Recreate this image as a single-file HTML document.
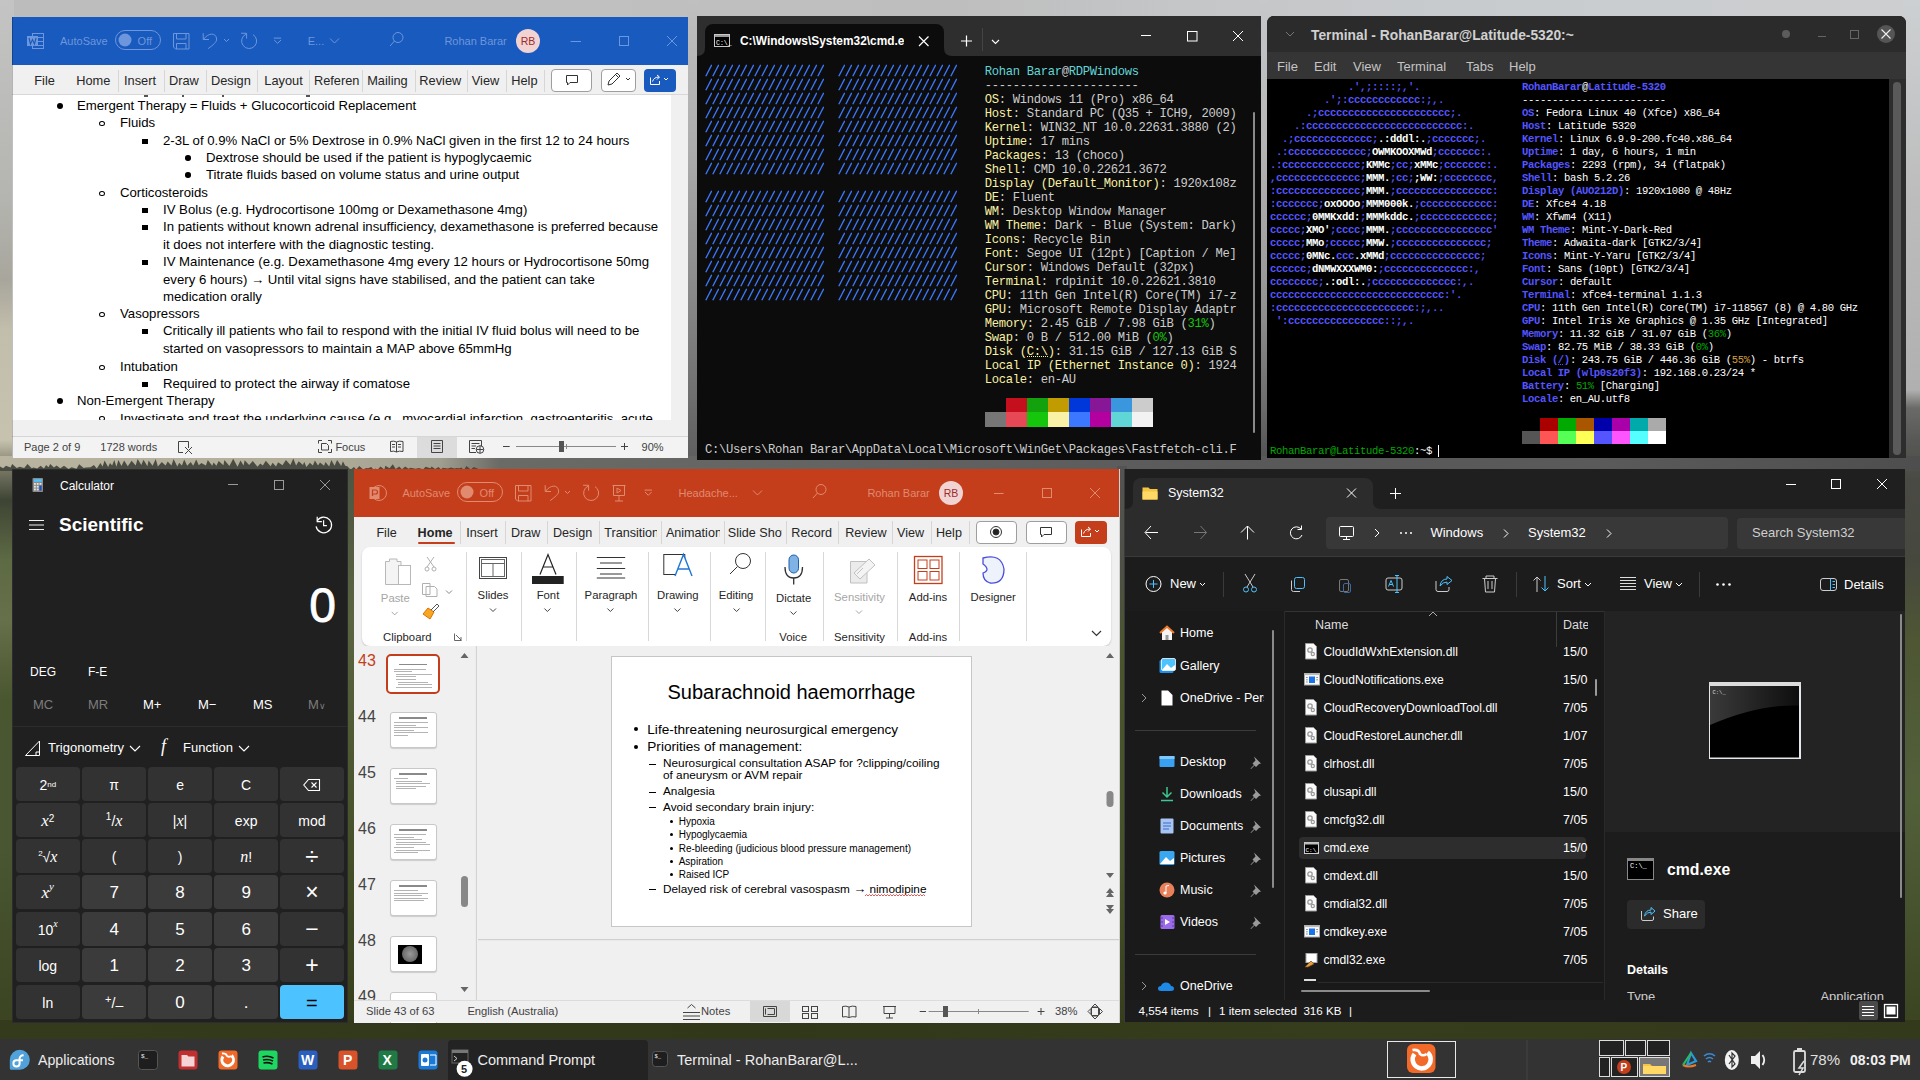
<!DOCTYPE html>
<html><head><meta charset="utf-8">
<style>
*{box-sizing:border-box;margin:0;padding:0}
html,body{width:1920px;height:1080px;overflow:hidden}
body{position:relative;font-family:"Liberation Sans",sans-serif;
background:linear-gradient(180deg,#c4c4c4 0px,#bdbdbd 200px,#a9a9a5 380px,#8a8a84 455px,#5a5f4a 520px,#48502c 700px,#3d4424 900px,#363c1e 1040px)}
.a{position:absolute}
.w{position:absolute;overflow:hidden}
.mono{font-family:"Liberation Mono",monospace}
.cmdp{font-size:12.2px;letter-spacing:-0.32px;line-height:14px;color:#cccccc;white-space:pre}
.cmdp .b{color:#3b78ff}.cmdp .c{color:#61d6d6}.cmdp .y{color:#f9f1a5}.cmdp .g{color:#16c60c}
.xfp{font-size:10.6px;letter-spacing:-0.36px;line-height:13px;color:#fff;white-space:pre}
.xfp .lb,.xfp .k{color:#5555ff;font-weight:bold}.xfp .lw{color:#fff;font-weight:bold}.xfp .v{color:#fff}.xfp .g{color:#00aa00}.xfp .o{color:#d7a040}.xfp .pg{color:#00aa00}
.wl{font-size:13.2px;line-height:20px;white-space:nowrap;color:#000}
.wt{top:55.5px;font-size:12.8px;line-height:16px;color:#262626;white-space:nowrap}
.wf{font-size:11px;line-height:16px;color:#6e96dc;white-space:nowrap}
.ws{top:422px;font-size:11px;line-height:16px;color:#424242;white-space:nowrap}
.cb{width:63.5px;height:33.6px;border-radius:4px;display:flex;align-items:center;justify-content:center;line-height:1;white-space:nowrap;padding-top:1.5px}
.cm{top:228px;font-size:13px;line-height:16px;color:#fff}
.pt{top:56px;font-size:12.6px;line-height:16px;color:#262626;white-space:nowrap}
.pf{top:16px;font-size:11px;line-height:16px;color:#e08a70;white-space:nowrap}
.ps{top:534px;font-size:11.2px;line-height:16px;color:#424242;white-space:nowrap}
.et{font-size:12.5px;line-height:16px;color:#fff;white-space:nowrap}
.ee{font-size:13px;line-height:16px;color:#fff;white-space:nowrap}
.xm{top:43px;color:#c4c4c4;font-size:13px;line-height:16px}
</style></head><body>

<!-- WALL -->
<div class="a" style="left:0;top:0;width:1920px;height:20px;background:linear-gradient(90deg,#bcbcbc 0,#c0c0c0 25%,#bebebe 50%,#c4c6c8 62%,#c9ccce 80%,#ccced0 100%)"></div>
<div class="a" style="left:0;top:0;width:14px;height:1040px;background:linear-gradient(180deg,#c4c4c4 0,#b4b4b0 200px,#a8a69c 280px,#c2beac 330px,#c6c2ae 440px,#7a7a66 468px,#3e4434 500px,#5e6a44 560px,#66704a 620px,#4a5630 700px,#4a5632 850px,#3a4220 1040px)"></div>
<div class="a" style="left:1903px;top:0;width:17px;height:1040px;background:linear-gradient(180deg,#cdd0d2 0,#bcbcbc 200px,#b0b0b0 390px,#6a6a68 408px,#585856 440px,#4a4a44 480px,#46483e 560px,#4e5634 640px,#52603a 800px,#3a4220 1040px)"></div>
<div class="a" style="left:686px;top:0;width:13px;height:470px;background:linear-gradient(180deg,#c0c0c0 0,#acacac 150px,#8c8c8c 280px,#6e6e6e 400px,#5c5c5c 470px)"></div>
<div class="a" style="left:1259px;top:0;width:10px;height:470px;background:linear-gradient(180deg,#c6c8ca 0,#b4b4b4 150px,#9a9a9a 280px,#6e6e6e 400px,#4e4e4e 470px)"></div>
<div class="a" style="left:0;top:456px;width:1920px;height:15px;background:linear-gradient(90deg,#b8b4a0 0,#b2ae9a 300px,#a09e90 440px,#6a6a66 500px,#626262 900px,#585858 1300px,#5a5a5a 1600px,#4e4e4e 1920px)"></div>
<svg class="a" style="left:0;top:456px" width="480" height="15"><polygon points="0.0,15.0 0.0,10.4 3.1,12.2 6.0,9.8 10.5,11.5 12.2,8.0 16.7,12.0 19.6,10.8 24.2,12.0 27.5,8.1 31.7,12.2 33.6,11.6 37.1,12.4 40.7,9.7 43.9,12.6 46.2,9.0 48.5,11.3 50.2,8.0 54.0,11.6 56.6,9.5 60.3,12.2 64.0,9.8 68.6,13.0 71.6,11.2 76.5,12.8 79.2,8.3 83.7,12.1 85.6,11.5 90.5,11.2 93.9,9.1 96.8,12.5 100.4,7.1 102.6,10.4 104.6,4.4 108.1,11.0 110.0,6.9 112.1,9.4 114.3,3.9 116.4,10.7 118.4,4.0 121.5,9.9 124.1,4.6 127.8,10.2 131.6,4.8 135.7,9.5 137.6,3.1 141.3,9.0 143.5,3.7 147.4,10.3 148.6,4.4 152.6,9.7 155.7,3.1 157.9,10.4 161.8,5.9 165.6,9.6 167.7,5.5 171.4,9.6 173.6,3.0 177.3,10.5 179.2,6.7 181.9,9.4 184.2,3.4 187.2,9.7 190.7,6.0 193.2,9.7 196.2,3.4 198.8,9.2 201.4,6.9 205.9,9.4 207.8,4.1 212.2,9.7 213.6,6.4 216.4,9.7 218.7,5.1 223.4,9.3 224.4,4.0 229.4,9.9 233.2,2.7 237.5,10.7 240.5,4.5 243.5,9.5 244.7,4.2 249.1,9.1 252.8,5.1 257.5,10.8 260.3,7.4 262.8,9.6 265.8,4.7 270.6,10.2 272.6,6.7 276.0,10.6 278.1,6.3 282.5,9.3 285.9,3.9 290.4,9.0 293.3,2.6 296.1,9.5 298.7,5.3 303.0,9.0 304.2,5.7 306.4,10.9 309.9,6.7 312.9,9.6 314.9,4.6 318.0,9.4 320.0,6.6 324.1,9.8 325.4,6.0 329.2,10.6 331.3,4.0 334.6,9.7 337.1,4.0 341.2,9.9 342.9,5.2 345.2,9.8 347.4,10.2 350.6,13.8 353.9,11.1 356.3,13.6 359.3,9.9 363.3,13.5 366.0,11.9 368.0,12.3 371.3,11.1 373.6,13.8 375.2,12.6 377.5,13.7 380.5,10.4 384.3,13.6 385.4,9.7 389.5,12.2 392.8,8.3 395.7,13.1 399.2,10.6 402.0,13.2 405.2,10.6 408.4,12.7 410.7,11.8 415.6,12.8 418.8,11.9 423.1,13.3 425.7,10.8 430.4,12.3 431.6,10.6 435.2,12.9 438.4,11.0 441.0,13.2 442.9,11.7 447.8,12.6 450.9,11.5 454.6,12.5 456.3,11.9 459.4,12.3 461.5,11.6 463.9,14.0 466.4,10.1 470.9,13.6 473.6,11.0 478.1,12.8 480.0,15.0" fill="#4a4c44"/></svg>
<div class="a" style="left:346px;top:469px;width:10px;height:557px;background:linear-gradient(180deg,#4e5444 0,#5a6440 150px,#444e28 400px,#363d1c 557px)"></div>
<div class="a" style="left:1117px;top:466px;width:10px;height:560px;background:linear-gradient(180deg,#545454 0,#4e5046 100px,#4a5530 180px,#46522a 400px,#363d1c 560px)"></div>
<div class="a" style="left:0;top:1020px;width:1920px;height:20px;background:linear-gradient(90deg,#343a1c,#31381a 40%,#363d1c 70%,#33391b)"></div>

<!-- WORD -->
<div class="w" id="word" style="left:12px;top:17px;width:676px;height:441px;background:#f3f3f3">
  <div class="a" style="left:0;top:0;width:676px;height:48px;background:#185abd"></div>
  <svg class="a" style="left:0;top:0" width="676" height="48" fill="none" stroke="#6e96dc" stroke-width="1">
    <rect x="20.5" y="16.5" width="11" height="15"/><path d="M20.5 20.5H31.5M20.5 24.5H31.5M20.5 28.5H31.5"/>
    <rect x="15.5" y="19.5" width="10" height="9" fill="#6e96dc"/>
    <path d="M17 21 L18.5 27 L20.5 22.5 L22.5 27 L24 21" stroke="#185abd" stroke-width="1.1"/>
    <rect x="103.5" y="13.5" width="45" height="19" rx="9.5"/><circle cx="113" cy="23" r="6.5" fill="#6e96dc" stroke="none"/>
    <path d="M161.5 16.5H177V32H163.5L161.5 30Z M164.5 16.5V22H174V16.5 M164.5 32V26.5H174V32"/>
    <path d="M191.2 16.2 V22.5 H197 M191.8 22 C196 16, 204 15, 204.6 22 C205 25, 201 28, 196.2 31.6"/>
    <path d="M212 22 L214.5 24.5 L217 22"/>
    <path d="M229.1 16.25 H234.6 V21.6 M234 17.2 A7.5 7.5 0 1 0 241 17.6"/>
    <path d="M261.8 21.1H269.2M262.2 23L265.6 26.3L269 23"/>
    <path d="M318 21.5 L322.5 26 L327 21.5"/>
    <circle cx="386" cy="20.5" r="5"/><path d="M382.5 24 L378 29"/>
    <path d="M558.6 24.5H569"/><rect x="607.5" y="19.5" width="9" height="9"/><path d="M655 19 L665 29 M665 19 L655 29"/>
  </svg>
  <div class="a wf" style="left:48px;top:16px">AutoSave</div>
  <div class="a wf" style="left:125.6px;top:16px">Off</div>
  <div class="a wf" style="left:295.7px;top:16px">E...</div>
  <div class="a wf" style="left:432.4px;top:16px">Rohan Barar</div>
  <div class="a" style="left:504px;top:12px;width:24px;height:24px;border-radius:50%;background:#f2d3d3;color:#9b2c2c;font-size:10.5px;line-height:24px;text-align:center">RB</div>
  <div class="a" style="left:0;top:48px;width:676px;height:30px;background:#f0f0f0"></div>
  <div class="a wt" style="left:22.3px">File</div><div class="a wt" style="left:64.2px">Home</div><div class="a wt" style="left:112px">Insert</div><div class="a wt" style="left:157px">Draw</div><div class="a wt" style="left:199px">Design</div><div class="a wt" style="left:252.3px">Layout</div><div class="a wt" style="left:301.9px">Referen</div><div class="a wt" style="left:355.2px">Mailing</div><div class="a wt" style="left:407.3px">Review</div><div class="a wt" style="left:459.8px">View</div><div class="a wt" style="left:499.2px">Help</div><div class="a" style="left:106px;top:53px;width:1px;height:22px;background:#d6d6d6"></div><div class="a" style="left:152px;top:53px;width:1px;height:22px;background:#d6d6d6"></div><div class="a" style="left:194px;top:53px;width:1px;height:22px;background:#d6d6d6"></div><div class="a" style="left:245px;top:53px;width:1px;height:22px;background:#d6d6d6"></div><div class="a" style="left:297px;top:53px;width:1px;height:22px;background:#d6d6d6"></div><div class="a" style="left:350px;top:53px;width:1px;height:22px;background:#d6d6d6"></div><div class="a" style="left:403px;top:53px;width:1px;height:22px;background:#d6d6d6"></div><div class="a" style="left:455px;top:53px;width:1px;height:22px;background:#d6d6d6"></div><div class="a" style="left:494px;top:53px;width:1px;height:22px;background:#d6d6d6"></div><div class="a" style="left:532px;top:53px;width:1px;height:22px;background:#d6d6d6"></div>
  <div class="a" style="left:538.5px;top:51.5px;width:41px;height:23.5px;border:1px solid #9e9e9e;border-radius:4px;background:#fff"></div>
  <div class="a" style="left:588.5px;top:51.5px;width:35px;height:23.5px;border:1px solid #9e9e9e;border-radius:4px;background:#fff"></div>
  <div class="a" style="left:632px;top:51.5px;width:32px;height:23.5px;border-radius:4px;background:#185abd"></div>
  <svg class="a" style="left:0;top:48px" width="676" height="30" fill="none" stroke="#333" stroke-width="1">
    <path d="M554.5 10.5H565.5V17.5H558L555.5 20V17.5H554.5Z"/>
    <path d="M596 20 L597 16 L605 8 L608 11 L600 19Z M603.5 9.5L606.5 12.5"/><path d="M614 13 L616 15 L618 13"/>
    <path d="M638.5 12.5V19.5H647.5V16 M640.5 16.5 Q642 12 647 12 M645 10 L647.5 12 L645 14.5" stroke="#fff"/><path d="M652 13 L654 15 L656 13" stroke="#fff"/>
  </svg>
  <div class="a" style="left:0;top:77px;width:676px;height:1px;background:#d8d8d8"></div><div class="a" style="left:0;top:0;width:1px;height:441px;background:rgba(0,0,0,.25);z-index:5"></div>
  <div class="a" style="left:0;top:78px;width:659px;height:324.5px;background:#fff;overflow:hidden"><div class="a wl" style="left:65px;top:1.3px">Emergent Therapy = Fluids + Glucocorticoid Replacement</div><div class="a" style="left:44.5px;top:8.1px;width:6px;height:6px;border-radius:50%;background:#000"></div><div class="a wl" style="left:108px;top:18.2px">Fluids</div><div class="a" style="left:87.4px;top:25.8px;width:5.6px;height:5px;border-radius:50%;border:1.1px solid #000"></div><div class="a wl" style="left:151px;top:36.0px">2-3L of 0.9% NaCl or 5% Dextrose in 0.9% NaCl given in the first 12 to 24 hours</div><div class="a" style="left:130.2px;top:43.5px;width:5.6px;height:5.6px;background:#000"></div><div class="a wl" style="left:194px;top:53.0px">Dextrose should be used if the patient is hypoglycaemic</div><div class="a" style="left:173.2px;top:60.0px;width:5.6px;height:5.6px;border-radius:50%;background:#000"></div><div class="a wl" style="left:194px;top:70.0px">Titrate fluids based on volume status and urine output</div><div class="a" style="left:173.2px;top:77.0px;width:5.6px;height:5.6px;border-radius:50%;background:#000"></div><div class="a wl" style="left:108px;top:87.9px">Corticosteroids</div><div class="a" style="left:87.4px;top:95.5px;width:5.6px;height:5px;border-radius:50%;border:1.1px solid #000"></div><div class="a wl" style="left:151px;top:105.3px">IV Bolus (e.g. Hydrocortisone 100mg or Dexamethasone 4mg)</div><div class="a" style="left:130.2px;top:112.8px;width:5.6px;height:5.6px;background:#000"></div><div class="a wl" style="left:151px;top:122.2px">In patients without known adrenal insufficiency, dexamethasone is preferred because</div><div class="a" style="left:130.2px;top:129.7px;width:5.6px;height:5.6px;background:#000"></div><div class="a wl" style="left:151px;top:140.0px">it does not interfere with the diagnostic testing.</div><div class="a wl" style="left:151px;top:157.0px">IV Maintenance (e.g. Dexamethasone 4mg every 12 hours or Hydrocortisone 50mg</div><div class="a" style="left:130.2px;top:164.5px;width:5.6px;height:5.6px;background:#000"></div><div class="a wl" style="left:151px;top:174.9px">every 6 hours) &#8594; Until vital signs have stabilised, and the patient can take</div><div class="a wl" style="left:151px;top:192.3px">medication orally</div><div class="a wl" style="left:108px;top:209.2px">Vasopressors</div><div class="a" style="left:87.4px;top:216.8px;width:5.6px;height:5px;border-radius:50%;border:1.1px solid #000"></div><div class="a wl" style="left:151px;top:226.2px">Critically ill patients who fail to respond with the initial IV fluid bolus will need to be</div><div class="a" style="left:130.2px;top:233.7px;width:5.6px;height:5.6px;background:#000"></div><div class="a wl" style="left:151px;top:244.0px">started on vasopressors to maintain a MAP above 65mmHg</div><div class="a wl" style="left:108px;top:261.9px">Intubation</div><div class="a" style="left:87.4px;top:269.5px;width:5.6px;height:5px;border-radius:50%;border:1.1px solid #000"></div><div class="a wl" style="left:151px;top:279.3px">Required to protect the airway if comatose</div><div class="a" style="left:130.2px;top:286.8px;width:5.6px;height:5.6px;background:#000"></div><div class="a wl" style="left:65px;top:296.2px">Non-Emergent Therapy</div><div class="a" style="left:44.5px;top:303.0px;width:6px;height:6px;border-radius:50%;background:#000"></div><div class="a wl" style="left:108px;top:313.5px">Investigate and treat the underlying cause (e.g., myocardial infarction, gastroenteritis, acute</div><div class="a" style="left:87.4px;top:321.1px;width:5.6px;height:5px;border-radius:50%;border:1.1px solid #000"></div>
    <div class="a" style="left:132px;top:0;width:4px;height:1.5px;background:#555"></div><div class="a" style="left:170px;top:0;width:1.5px;height:1.5px;background:#555"></div><div class="a" style="left:210px;top:0;width:1.5px;height:1.5px;background:#555"></div><div class="a" style="left:294px;top:0;width:4px;height:1.5px;background:#555"></div>
  </div>
  <div class="a" style="left:659px;top:78px;width:17px;height:341px;background:#f0f0f0"></div>
  <div class="a" style="left:0;top:402.5px;width:659px;height:16.5px;background:#f0f0f0"></div>
  <div class="a" style="left:0;top:419px;width:676px;height:22px;background:#f3f3f3;border-top:1px solid #d6d6d6"></div>
  <div class="a ws" style="left:12px">Page 2 of 9</div>
  <div class="a ws" style="left:88.3px">1728 words</div>
  <div class="a ws" style="left:323.4px">Focus</div>
  <div class="a ws" style="left:629.6px">90%</div>
  <div class="a" style="left:405px;top:420px;width:40px;height:21px;background:#dcdcdc"></div>
  <svg class="a" style="left:0;top:418px" width="676" height="23" fill="none" stroke="#444" stroke-width="1">
    <path d="M166.5 6.5H176.5V13 M166.5 6.5V17.5H171 M173 12L180 19M180 12L173 19"/>
    <path d="M306.5 8.5V5.5H310 M316 5.5H319.5V8.5 M319.5 14V17.5H316 M310 17.5H306.5V14 M309.5 8.5H314.5L316.5 10.5V15H309.5Z"/>
    <path d="M378.5 6.5Q382 5.5 384.5 7V17Q382 15.5 378.5 16.5Z M384.5 7Q387 5.5 391 6.5V16.5Q387 15.5 384.5 17 M380 9.5H383M380 12H383M386 9.5H389M386 12H389"/>
    <path d="M419.5 5.5H430.5V17.5H419.5Z M421.5 8.5H428.5M421.5 11H428.5M421.5 13.5H428.5"/>
    <path d="M457.5 5.5H469.5V11 M457.5 5.5V17.5H464 M459.5 8.5H467.5M459.5 11H464M459.5 13.5H463"/><circle cx="468" cy="14.5" r="3.8"/><path d="M464.5 14.5H471.5M468 10.7V18.3"/>
    <path d="M491 11.5H497.7 M609 11.5H616 M612.5 8V15"/><path d="M504 11.5H604" stroke="#888"/>
    <rect x="547" y="6" width="5" height="11" fill="#555" stroke="none"/><path d="M554.5 9V14" stroke="#888"/>
  </svg>
</div>

<!-- CMD -->
<div class="w" id="cmd" style="left:697px;top:16px;width:564px;height:444px;background:#0c0c0c">
  <div class="a" style="left:0;top:0;width:564px;height:40px;background:#2e2e2e"></div>
  <div class="a" style="left:8px;top:8px;width:239px;height:32px;background:#0c0c0c;border-radius:8px 8px 0 0"></div>
  <svg class="a" style="left:0;top:0" width="564" height="40">
    <path d="M0 40 Q8 40 8 32 L8 40Z" fill="#0c0c0c"/>
    <path d="M247 32 Q247 40 255 40 L247 40Z" fill="#0c0c0c"/>
    <rect x="17.5" y="18.5" width="15" height="12" fill="#000" stroke="#c8c8c8" stroke-width="1"/>
    <rect x="18" y="19" width="14" height="2" fill="#9a9a9a"/>
    <text x="19" y="28.5" font-family="Liberation Mono" font-size="6.5" fill="#fff">C:\_</text>
    <path d="M222 20.5 L231.5 30 M231.5 20.5 L222 30" stroke="#fff" stroke-width="1.2"/>
    <path d="M264 25 H275 M269.5 19.5 V30.5" stroke="#fff" stroke-width="1.2"/>
    <path d="M285.5 12 V35" stroke="#444" stroke-width="1"/>
    <path d="M295 24 L298.5 27.5 L302 24" stroke="#fff" stroke-width="1.1" fill="none"/>
    <path d="M444 19.5 H454" stroke="#fff" stroke-width="1"/>
    <rect x="490.5" y="15.5" width="9.5" height="9.5" fill="none" stroke="#fff" stroke-width="1"/>
    <path d="M536 15 L546 25 M546 15 L536 25" stroke="#fff" stroke-width="1"/>
  </svg>
  <div class="a" style="left:43px;top:16px;width:164px;height:18px;overflow:hidden;color:#fff;font-size:11.9px;font-weight:bold;line-height:18px;white-space:nowrap">C:\Windows\System32\cmd.exe</div>
  <svg class="a" style="left:8px;top:48px" width="252" height="238"><defs><pattern id="sl" width="7" height="14" patternUnits="userSpaceOnUse"><path d="M0.8 12.2 L6.7 0.8" stroke="#3b78ff" stroke-width="1.3"/></pattern></defs>
<rect x="0" y="0" width="119" height="112" fill="url(#sl)"/><rect x="133" y="0" width="119" height="112" fill="url(#sl)"/>
<rect x="0" y="126" width="119" height="112" fill="url(#sl)"/><rect x="133" y="126" width="119" height="112" fill="url(#sl)"/></svg>
  <pre class="a mono cmdp" style="left:8px;top:49px">                                        <span class="c">Rohan Barar</span>@<span class="c">RDPWindows</span>
                                        ----------------------
                                        <span class="y">OS</span>: Windows 11 (Pro) x86_64
                                        <span class="y">Host</span>: Standard PC (Q35 + ICH9, 2009)
                                        <span class="y">Kernel</span>: WIN32_NT 10.0.22631.3880 (2)
                                        <span class="y">Uptime</span>: 17 mins
                                        <span class="y">Packages</span>: 13 (choco)
                                        <span class="y">Shell</span>: CMD 10.0.22621.3672
                                        <span class="y">Display (Default_Monitor)</span>: 1920x108z
                                        <span class="y">DE</span>: Fluent
                                        <span class="y">WM</span>: Desktop Window Manager
                                        <span class="y">WM Theme</span>: Dark - Blue (System: Dark)
                                        <span class="y">Icons</span>: Recycle Bin
                                        <span class="y">Font</span>: Segoe UI (12pt) [Caption / Me]
                                        <span class="y">Cursor</span>: Windows Default (32px)
                                        <span class="y">Terminal</span>: rdpinit 10.0.22621.3810
                                        <span class="y">CPU</span>: 11th Gen Intel(R) Core(TM) i7-z
                                        <span class="y">GPU</span>: Microsoft Remote Display Adaptr
                                        <span class="y">Memory</span>: 2.45 GiB / 7.98 GiB (<span class="g">31%</span>)
                                        <span class="y">Swap</span>: 0 B / 512.00 MiB (<span class="g">0%</span>)
                                        <span class="y">Disk (C:\)</span>: 31.15 GiB / 127.13 GiB S
                                        <span class="y">Local IP (Ethernet Instance 0)</span>: 1924
                                        <span class="y">Locale</span>: en-AU
                                        
                                        
                                        
                                        
C:\Users\Rohan Barar\AppData\Local\Microsoft\WinGet\Packages\Fastfetch-cli.F</pre>
  <div class="a" style="left:309px;top:382px;width:21px;height:14px;background:#c50f1f"></div><div class="a" style="left:330px;top:382px;width:21px;height:14px;background:#13a10e"></div><div class="a" style="left:351px;top:382px;width:21px;height:14px;background:#c19c00"></div><div class="a" style="left:372px;top:382px;width:21px;height:14px;background:#0037da"></div><div class="a" style="left:393px;top:382px;width:21px;height:14px;background:#881798"></div><div class="a" style="left:414px;top:382px;width:21px;height:14px;background:#3a96dd"></div><div class="a" style="left:435px;top:382px;width:21px;height:14px;background:#cccccc"></div><div class="a" style="left:288px;top:396px;width:21px;height:15px;background:#767676"></div><div class="a" style="left:309px;top:396px;width:21px;height:15px;background:#e74856"></div><div class="a" style="left:330px;top:396px;width:21px;height:15px;background:#16c60c"></div><div class="a" style="left:351px;top:396px;width:21px;height:15px;background:#f9f1a5"></div><div class="a" style="left:372px;top:396px;width:21px;height:15px;background:#3b78ff"></div><div class="a" style="left:393px;top:396px;width:21px;height:15px;background:#b4009e"></div><div class="a" style="left:414px;top:396px;width:21px;height:15px;background:#61d6d6"></div><div class="a" style="left:435px;top:396px;width:21px;height:15px;background:#f2f2f2"></div>
  <div class="a" style="left:556px;top:96px;width:2px;height:321px;background:#8a8a8a;border-radius:1px"></div><div class="a" style="left:330px;top:340px;width:21px;height:1px;background:repeating-linear-gradient(90deg,#f9f1a5 0,#f9f1a5 1px,transparent 1px,transparent 2px)"></div>
</div>

<!-- XFCE -->
<div class="w" id="xfce" style="left:1267px;top:16px;width:639px;height:442px;background:#000;border-radius:7px 7px 0 0">
  <div class="a" style="left:0;top:0;width:639px;height:36px;background:#2b2b2b"></div>
  <div class="a" style="left:0;top:36px;width:639px;height:27px;background:#353535"></div>
  <svg class="a" style="left:0;top:0" width="639" height="63">
    <path d="M19 16 L23 20 L27 16" stroke="#777" stroke-width="1" fill="none"/>
    <circle cx="519" cy="18" r="4" fill="#5c5c5c"/>
    <path d="M551 20.5 H559" stroke="#666" stroke-width="1"/>
    <rect x="583.5" y="14.5" width="8" height="8" fill="none" stroke="#666" stroke-width="1"/>
    <circle cx="619" cy="18" r="9" fill="#555"/>
    <path d="M614.5 13.5 L623.5 22.5 M623.5 13.5 L614.5 22.5" stroke="#eee" stroke-width="1.1"/>
  </svg>
  <div class="a" style="left:44px;top:10.5px;color:#d0d0d0;font-weight:bold;font-size:13.8px;line-height:18px;white-space:nowrap">Terminal - RohanBarar@Latitude-5320:~</div>
  <div class="a xm" style="left:10px">File</div><div class="a xm" style="left:47px">Edit</div><div class="a xm" style="left:86px">View</div><div class="a xm" style="left:130px">Terminal</div><div class="a xm" style="left:199px">Tabs</div><div class="a xm" style="left:242px">Help</div>
  <pre class="a mono xfp" style="left:3px;top:65px"><span class="lb">             .&#x27;,;::::;,&#x27;.</span>                 <span class="k">RohanBarar</span><span class="v">@</span><span class="k">Latitude-5320</span>
<span class="lb">         .&#x27;;:cccccccccccc:;,.</span>             <span class="v">------------------------</span>
<span class="lb">      .;cccccccccccccccccccccc;.</span>          <span class="k">OS</span><span class="v">: Fedora Linux 40 (Xfce) x86_64</span>
<span class="lb">    .:cccccccccccccccccccccccccc:.</span>        <span class="k">Host</span><span class="v">: Latitude 5320</span>
<span class="lb">  .;ccccccccccccc;</span><span class="lw">.:dddl:.</span><span class="lb">;ccccccc;.</span>      <span class="k">Kernel</span><span class="v">: Linux 6.9.9-200.fc40.x86_64</span>
<span class="lb"> .:ccccccccccccc;</span><span class="lw">OWMKOOXMWd</span><span class="lb">;ccccccc:.</span>     <span class="k">Uptime</span><span class="v">: 1 day, 6 hours, 1 min</span>
<span class="lb">.:ccccccccccccc;</span><span class="lw">KMMc</span><span class="lb">;cc;</span><span class="lw">xMMc</span><span class="lb">;ccccccc:.</span>    <span class="k">Packages</span><span class="v">: 2293 (rpm), 34 (flatpak)</span>
<span class="lb">,cccccccccccccc;</span><span class="lw">MMM.</span><span class="lb">;cc;</span><span class="lw">;WW:</span><span class="lb">;cccccccc,</span>    <span class="k">Shell</span><span class="v">: bash 5.2.26</span>
<span class="lb">:cccccccccccccc;</span><span class="lw">MMM.</span><span class="lb">;cccccccccccccccc:</span>    <span class="k">Display (AUO212D)</span><span class="v">: 1920x1080 @ 48Hz</span>
<span class="lb">:ccccccc;</span><span class="lw">oxOOOo</span><span class="lb">;</span><span class="lw">MMM000k.</span><span class="lb">;cccccccccccc:</span>    <span class="k">DE</span><span class="v">: Xfce4 4.18</span>
<span class="lb">cccccc;</span><span class="lw">0MMKxdd:</span><span class="lb">;</span><span class="lw">MMMkddc.</span><span class="lb">;cccccccccccc;</span>    <span class="k">WM</span><span class="v">: Xfwm4 (X11)</span>
<span class="lb">ccccc;</span><span class="lw">XMO&#x27;</span><span class="lb">;cccc;</span><span class="lw">MMM.</span><span class="lb">;cccccccccccccccc&#x27;</span>    <span class="k">WM Theme</span><span class="v">: Mint-Y-Dark-Red</span>
<span class="lb">ccccc;</span><span class="lw">MMo</span><span class="lb">;ccccc;</span><span class="lw">MMW.</span><span class="lb">;ccccccccccccccc;</span>     <span class="k">Theme</span><span class="v">: Adwaita-dark [GTK2/3/4]</span>
<span class="lb">ccccc;</span><span class="lw">0MNc.</span><span class="lb">ccc</span><span class="lw">.xMMd</span><span class="lb">;ccccccccccccccc;</span>      <span class="k">Icons</span><span class="v">: Mint-Y-Yaru [GTK2/3/4]</span>
<span class="lb">cccccc;</span><span class="lw">dNMWXXXWM0:</span><span class="lb">;cccccccccccccc:,</span>       <span class="k">Font</span><span class="v">: Sans (10pt) [GTK2/3/4]</span>
<span class="lb">cccccccc;</span><span class="lw">.:odl:.</span><span class="lb">;cccccccccccccc:,.</span>        <span class="k">Cursor</span><span class="v">: default</span>
<span class="lb">ccccccccccccccccccccccccccccc:&#x27;.</span>          <span class="k">Terminal</span><span class="v">: xfce4-terminal 1.1.3</span>
<span class="lb">:ccccccccccccccccccccccc:;,..</span>             <span class="k">CPU</span><span class="v">: 11th Gen Intel(R) Core(TM) i7-1185G7 (8) @ 4.80 GHz</span>
<span class="lb"> &#x27;:cccccccccccccccc::;,.</span>                  <span class="k">GPU</span><span class="v">: Intel Iris Xe Graphics @ 1.35 GHz [Integrated]</span>
                                          <span class="k">Memory</span><span class="v">: 11.32 GiB / 31.07 GiB (<span class="g">36%</span>)</span>
                                          <span class="k">Swap</span><span class="v">: 82.75 MiB / 38.33 GiB (<span class="g">0%</span>)</span>
                                          <span class="k">Disk (/)</span><span class="v">: 243.75 GiB / 446.36 GiB (<span class="o">55%</span>) - btrfs</span>
                                          <span class="k">Local IP (wlp0s20f3)</span><span class="v">: 192.168.0.23/24 *</span>
                                          <span class="k">Battery</span><span class="v">: <span class="g">51%</span> [Charging]</span>
                                          <span class="k">Locale</span><span class="v">: en_AU.utf8</span>
                                          
                                          
                                          
<span class="pg">RohanBarar@Latitude-5320</span><span class="v">:~$ </span></pre>
  <div class="a" style="left:273px;top:402px;width:18px;height:13px;background:#aa0000"></div><div class="a" style="left:291px;top:402px;width:18px;height:13px;background:#00aa00"></div><div class="a" style="left:309px;top:402px;width:18px;height:13px;background:#aa5500"></div><div class="a" style="left:327px;top:402px;width:18px;height:13px;background:#0000aa"></div><div class="a" style="left:345px;top:402px;width:18px;height:13px;background:#aa00aa"></div><div class="a" style="left:363px;top:402px;width:18px;height:13px;background:#00aaaa"></div><div class="a" style="left:381px;top:402px;width:18px;height:13px;background:#aaaaaa"></div><div class="a" style="left:255px;top:415px;width:18px;height:13px;background:#555555"></div><div class="a" style="left:273px;top:415px;width:18px;height:13px;background:#ff5555"></div><div class="a" style="left:291px;top:415px;width:18px;height:13px;background:#55ff55"></div><div class="a" style="left:309px;top:415px;width:18px;height:13px;background:#ffff55"></div><div class="a" style="left:327px;top:415px;width:18px;height:13px;background:#5555ff"></div><div class="a" style="left:345px;top:415px;width:18px;height:13px;background:#ff55ff"></div><div class="a" style="left:363px;top:415px;width:18px;height:13px;background:#55ffff"></div><div class="a" style="left:381px;top:415px;width:18px;height:13px;background:#ffffff"></div><div class="a" style="left:171px;top:429px;width:1px;height:12px;background:#fff"></div>
  <div class="a" style="left:291px;top:348px;width:6px;height:1px;background:repeating-linear-gradient(90deg,#5555ff 0,#5555ff 1px,transparent 1px,transparent 2px)"></div><div class="a" style="left:622px;top:63px;width:17px;height:379px;background:#2d2d2d"></div>
  <div class="a" style="left:626px;top:66px;width:8px;height:373px;background:#5a5a5a;border-radius:4px"></div>
</div>

<!-- CALC -->
<div class="w" id="calc" style="left:12px;top:469px;width:336px;height:554px;background:#202020;box-shadow:inset 0 0 0 1px #2c2c2c">
  <svg class="a" style="left:0;top:0" width="336" height="290" fill="none">
    <rect x="20.5" y="9" width="10.5" height="14" rx="0.8" fill="#8a8a8a"/><rect x="21.8" y="10.2" width="8" height="2.6" fill="#4cc2ff"/>
    <g fill="#e6e6e6"><rect x="22" y="14" width="1.8" height="1.8"/><rect x="24.8" y="14" width="1.8" height="1.8"/><rect x="27.6" y="14" width="1.8" height="1.8"/><rect x="22" y="16.8" width="1.8" height="1.8"/><rect x="24.8" y="16.8" width="1.8" height="1.8"/><rect x="22" y="19.6" width="1.8" height="1.8"/><rect x="24.8" y="19.6" width="1.8" height="1.8"/></g><rect x="27.4" y="16.6" width="2.2" height="5" fill="#1e4fb8"/>
    <path d="M216 15.5H226" stroke="#9a9a9a"/><rect x="262.5" y="11.5" width="9" height="9" stroke="#9a9a9a"/><path d="M308 11L318 21M318 11L308 21" stroke="#9a9a9a"/>
    <path d="M17 51.5H32M17 56H32M17 60.5H32" stroke="#f0f0f0" stroke-width="1.1"/>
    <path d="M305.3 51.6 A7.8 7.8 0 1 1 304.1 57.3" stroke="#fff" stroke-width="1.2"/><path d="M305.2 47.7 V52.6 H309.9" stroke="#fff" stroke-width="1.2"/><path d="M311.6 51.3 V56.6 H314.9" stroke="#fff" stroke-width="1.2"/>
    <path d="M259 257.5H336" stroke="#2f2f2f"/><path d="M0 257.5H336" stroke="#2c2c2c"/>
    <path d="M13.5 286.5H27.5V272Z M24 286.5V283H27.5" stroke="#fff" stroke-width="1"/>
    <path d="M118 277L123 282L128 277M227 277L232 282L237 277" stroke="#fff" stroke-width="1.1"/>
  </svg>
  <div class="a" style="left:48px;top:9px;font-size:12px;line-height:16px;color:#fff">Calculator</div>
  <div class="a" style="left:47px;top:43px;font-size:19px;line-height:26px;color:#fff;font-weight:bold">Scientific</div>
  <div class="a" style="left:200px;top:110px;width:124px;text-align:right;font-size:48px;line-height:54px;color:#fff;font-weight:normal;-webkit-text-stroke:0.8px #fff">0</div>
  <div class="a" style="left:18px;top:195px;font-size:12px;line-height:16px;color:#fff">DEG</div>
  <div class="a" style="left:76px;top:195px;font-size:12px;line-height:16px;color:#fff">F-E</div>
  <div class="a cm" style="left:21px;color:#7c7c7c">MC</div><div class="a cm" style="left:76px;color:#7c7c7c">MR</div><div class="a cm" style="left:131px">M+</div><div class="a cm" style="left:186px">M&#8722;</div><div class="a cm" style="left:241px">MS</div><div class="a cm" style="left:296px;color:#7c7c7c">M<span style="font-size:9px">&#8744;</span></div>
  <div class="a" style="left:36px;top:271px;font-size:13px;line-height:16px;color:#fff">Trigonometry</div>
  <div class="a" style="left:149px;top:266px;font-size:18px;line-height:22px;color:#fff;font-family:Liberation Serif;font-style:italic">f</div>
  <div class="a" style="left:171px;top:271px;font-size:13px;line-height:16px;color:#fff">Function</div>
  <div class="a cb" style="left:4.0px;top:298.3px;background:#323232;color:#fff;font-size:14px">2<sup style="font-size:8px">nd</sup></div><div class="a cb" style="left:70.4px;top:298.3px;background:#323232;color:#fff;font-size:14px">&#960;</div><div class="a cb" style="left:136.3px;top:298.3px;background:#323232;color:#fff;font-size:14px">e</div><div class="a cb" style="left:202.4px;top:298.3px;background:#323232;color:#fff;font-size:14px">C</div><div class="a cb" style="left:268.2px;top:298.3px;background:#323232;color:#fff;font-size:14px"><svg width="18" height="12" fill="none" stroke="#fff" stroke-width="1.1"><path d="M5.5 0.5H16.5V11.5H5.5L0.8 6Z M8.5 3.5L13.5 8.5M13.5 3.5L8.5 8.5"/></svg></div><div class="a cb" style="left:4.0px;top:334.3px;background:#323232;color:#fff;font-size:14px"><i style="font-family:Liberation Serif;font-size:17px">x</i><sup style="font-size:10px;position:relative;top:-2px">2</sup></div><div class="a cb" style="left:70.4px;top:334.3px;background:#323232;color:#fff;font-size:14px"><span style="font-size:10px;position:relative;top:-4px">1</span>/<i style="font-family:Liberation Serif;font-size:16px">x</i></div><div class="a cb" style="left:136.3px;top:334.3px;background:#323232;color:#fff;font-size:14px">|<i style="font-family:Liberation Serif;font-size:16px">x</i>|</div><div class="a cb" style="left:202.4px;top:334.3px;background:#323232;color:#fff;font-size:14px">exp</div><div class="a cb" style="left:268.2px;top:334.3px;background:#323232;color:#fff;font-size:14px">mod</div><div class="a cb" style="left:4.0px;top:370.3px;background:#323232;color:#fff;font-size:14px"><sup style="font-size:8px;position:relative;top:-3px">2</sup>&#8730;<i style="font-family:Liberation Serif;font-size:16px">x</i></div><div class="a cb" style="left:70.4px;top:370.3px;background:#323232;color:#fff;font-size:14px">(</div><div class="a cb" style="left:136.3px;top:370.3px;background:#323232;color:#fff;font-size:14px">)</div><div class="a cb" style="left:202.4px;top:370.3px;background:#323232;color:#fff;font-size:14px"><i style="font-family:Liberation Serif;font-size:16px">n</i>!</div><div class="a cb" style="left:268.2px;top:370.3px;background:#323232;color:#fff;font-size:24px">&#247;</div><div class="a cb" style="left:4.0px;top:406.3px;background:#323232;color:#fff;font-size:14px"><i style="font-family:Liberation Serif;font-size:17px">x</i><i style="font-family:Liberation Serif;font-size:11px;position:relative;top:-6px">y</i></div><div class="a cb" style="left:70.4px;top:406.3px;background:#3b3b3b;color:#fff;font-size:17px">7</div><div class="a cb" style="left:136.3px;top:406.3px;background:#3b3b3b;color:#fff;font-size:17px">8</div><div class="a cb" style="left:202.4px;top:406.3px;background:#3b3b3b;color:#fff;font-size:17px">9</div><div class="a cb" style="left:268.2px;top:406.3px;background:#323232;color:#fff;font-size:23px">&#215;</div><div class="a cb" style="left:4.0px;top:443.2px;background:#323232;color:#fff;font-size:14px">10<i style="font-family:Liberation Serif;font-size:10px;position:relative;top:-6px">x</i></div><div class="a cb" style="left:70.4px;top:443.2px;background:#3b3b3b;color:#fff;font-size:17px">4</div><div class="a cb" style="left:136.3px;top:443.2px;background:#3b3b3b;color:#fff;font-size:17px">5</div><div class="a cb" style="left:202.4px;top:443.2px;background:#3b3b3b;color:#fff;font-size:17px">6</div><div class="a cb" style="left:268.2px;top:443.2px;background:#323232;color:#fff;font-size:23px">&#8722;</div><div class="a cb" style="left:4.0px;top:479.4px;background:#323232;color:#fff;font-size:14px">log</div><div class="a cb" style="left:70.4px;top:479.4px;background:#3b3b3b;color:#fff;font-size:17px">1</div><div class="a cb" style="left:136.3px;top:479.4px;background:#3b3b3b;color:#fff;font-size:17px">2</div><div class="a cb" style="left:202.4px;top:479.4px;background:#3b3b3b;color:#fff;font-size:17px">3</div><div class="a cb" style="left:268.2px;top:479.4px;background:#323232;color:#fff;font-size:23px">+</div><div class="a cb" style="left:4.0px;top:516.0px;background:#323232;color:#fff;font-size:14px">ln</div><div class="a cb" style="left:70.4px;top:516.0px;background:#3b3b3b;color:#fff;font-size:14px"><span style="font-size:11px;position:relative;top:-3px">+</span>/<span style="position:relative;top:2px">&#8211;</span></div><div class="a cb" style="left:136.3px;top:516.0px;background:#3b3b3b;color:#fff;font-size:17px">0</div><div class="a cb" style="left:202.4px;top:516.0px;background:#3b3b3b;color:#fff;font-size:17px">.</div><div class="a cb" style="left:268.2px;top:516.0px;background:#4cc2ff;color:#000;font-size:20px">=</div>
</div>

<!-- PPT -->
<div class="w" id="ppt" style="left:354px;top:469px;width:766px;height:554px;background:#f0f0f0;box-shadow:inset -1px 0 0 #d0d0d0">
  <div class="a" style="left:0;top:0;width:765px;height:48px;background:#c43e1c"></div>
  <svg class="a" style="left:0;top:0" width="765" height="48" fill="none" stroke="#e08a70" stroke-width="1">
    <circle cx="25" cy="24" r="7.5"/><rect x="16" y="18.5" width="9" height="11" fill="#e08a70"/><path d="M18.5 27V21H21.5Q23.5 21 23.5 23Q23.5 25 21.5 25H18.5" stroke="#c43e1c" stroke-width="1.2"/>
    <rect x="103.5" y="13.5" width="45" height="19" rx="9.5"/><circle cx="113" cy="23" r="6.5" fill="#e08a70" stroke="none"/>
    <path d="M161.5 16.5H177V32H163.5L161.5 30Z M164.5 16.5V22H174V16.5 M164.5 32V26.5H174V32"/>
    <path d="M191.2 16.2 V22.5 H197 M191.8 22 C196 16, 204 15, 204.6 22 C205 25, 201 28, 196.2 31.6"/>
    <path d="M211 22 L213.5 24.5 L216 22"/>
    <path d="M229.1 16.25 H234.6 V21.6 M234 17.2 A7.5 7.5 0 1 0 241 17.6"/>
    <path d="M258.5 16.5H271.5 M259.5 16.5V26.5H270.5V16.5 M265 26.5V32 M261 32H269 M263 19V24L267 21.5Z"/>
    <path d="M290.5 21.1H298M291 23L294.3 26.3L297.6 23"/>
    <path d="M399 21.5 L403.5 26 L408 21.5"/>
    <circle cx="467" cy="20.5" r="5"/><path d="M463.5 24 L459 29"/>
    <path d="M640 24.5H649.6"/><rect x="688.5" y="19.5" width="9" height="9"/><path d="M736 19 L746 29 M746 19 L736 29"/>
  </svg>
  <div class="a pf" style="left:48.4px">AutoSave</div>
  <div class="a pf" style="left:125.6px">Off</div>
  <div class="a pf" style="left:324.5px">Headache...</div>
  <div class="a pf" style="left:513.4px">Rohan Barar</div>
  <div class="a" style="left:585px;top:12px;width:24px;height:24px;border-radius:50%;background:#f2d3d3;color:#9b2c2c;font-size:10.5px;line-height:24px;text-align:center">RB</div>
  <div class="a pt" style="left:22.4px;">File</div><div class="a pt" style="left:63.6px;font-weight:bold;">Home</div><div class="a pt" style="left:112.2px;">Insert</div><div class="a pt" style="left:157px;">Draw</div><div class="a pt" style="left:199px;">Design</div><div class="a pt" style="left:250.3px;width:53px;overflow:hidden;">Transitions</div><div class="a pt" style="left:311.9px;width:54px;overflow:hidden;">Animations</div><div class="a pt" style="left:373.8px;width:54px;overflow:hidden;">Slide Show</div><div class="a pt" style="left:437.3px;">Record</div><div class="a pt" style="left:491.2px;">Review</div><div class="a pt" style="left:543px;">View</div><div class="a pt" style="left:582px;">Help</div><div class="a" style="left:106px;top:52px;width:1px;height:23px;background:#d6d6d6"></div><div class="a" style="left:151px;top:52px;width:1px;height:23px;background:#d6d6d6"></div><div class="a" style="left:193px;top:52px;width:1px;height:23px;background:#d6d6d6"></div><div class="a" style="left:245px;top:52px;width:1px;height:23px;background:#d6d6d6"></div><div class="a" style="left:307px;top:52px;width:1px;height:23px;background:#d6d6d6"></div><div class="a" style="left:370px;top:52px;width:1px;height:23px;background:#d6d6d6"></div><div class="a" style="left:432px;top:52px;width:1px;height:23px;background:#d6d6d6"></div><div class="a" style="left:484px;top:52px;width:1px;height:23px;background:#d6d6d6"></div><div class="a" style="left:538px;top:52px;width:1px;height:23px;background:#d6d6d6"></div><div class="a" style="left:577px;top:52px;width:1px;height:23px;background:#d6d6d6"></div><div class="a" style="left:615px;top:52px;width:1px;height:23px;background:#d6d6d6"></div>
  <div class="a" style="left:63.6px;top:72.5px;width:37px;height:2.5px;background:#c43e1c;border-radius:1px"></div>
  <div class="a" style="left:621.5px;top:51.5px;width:41px;height:23px;border:1px solid #9e9e9e;border-radius:4px;background:#fff"></div>
  <div class="a" style="left:671.5px;top:51.5px;width:41px;height:23px;border:1px solid #9e9e9e;border-radius:4px;background:#fff"></div>
  <div class="a" style="left:721px;top:51.5px;width:32px;height:23px;border-radius:4px;background:#c43e1c"></div>
  <svg class="a" style="left:0;top:48px" width="765" height="30" fill="none" stroke="#333" stroke-width="1">
    <circle cx="642" cy="15" r="5.5"/><circle cx="642" cy="15" r="3" fill="#222"/>
    <path d="M686.5 10.5H697.5V17.5H690L687.5 20V17.5H686.5Z"/>
    <path d="M727.5 12.5V19.5H736.5V16 M729.5 16.5 Q731 12 736 12 M734 10 L736.5 12 L734 14.5" stroke="#fff"/><path d="M741 13 L743 15 L745 13" stroke="#fff"/>
  </svg>
  <div class="a" style="left:8px;top:78px;width:749px;height:99px;background:#fff;border-radius:8px;box-shadow:0 1px 2px rgba(0,0,0,.18)"></div>
  <div class="a" style="left:112px;top:83px;width:1px;height:89px;background:#d8d8d8"></div><div class="a" style="left:167px;top:83px;width:1px;height:89px;background:#d8d8d8"></div><div class="a" style="left:222px;top:83px;width:1px;height:89px;background:#d8d8d8"></div><div class="a" style="left:294px;top:83px;width:1px;height:89px;background:#d8d8d8"></div><div class="a" style="left:356px;top:83px;width:1px;height:89px;background:#d8d8d8"></div><div class="a" style="left:411px;top:83px;width:1px;height:89px;background:#d8d8d8"></div><div class="a" style="left:469px;top:83px;width:1px;height:89px;background:#d8d8d8"></div><div class="a" style="left:543px;top:83px;width:1px;height:89px;background:#d8d8d8"></div><div class="a" style="left:605px;top:83px;width:1px;height:89px;background:#d8d8d8"></div><div class="a" style="left:672px;top:83px;width:1px;height:89px;background:#d8d8d8"></div><div class="a" style="left:1.2999999999999972px;top:121px;width:80px;text-align:center;font-size:11.3px;line-height:16px;color:#a6a6a6;white-space:nowrap">Paste</div><div class="a" style="left:13.299999999999997px;top:160px;width:80px;text-align:center;font-size:11.3px;line-height:16px;color:#262626;white-space:nowrap">Clipboard</div><div class="a" style="left:99px;top:118px;width:80px;text-align:center;font-size:11.3px;line-height:16px;color:#262626;white-space:nowrap">Slides</div><div class="a" style="left:154px;top:118px;width:80px;text-align:center;font-size:11.3px;line-height:16px;color:#262626;white-space:nowrap">Font</div><div class="a" style="left:217px;top:118px;width:80px;text-align:center;font-size:11.3px;line-height:16px;color:#262626;white-space:nowrap">Paragraph</div><div class="a" style="left:283.8px;top:118px;width:80px;text-align:center;font-size:11.3px;line-height:16px;color:#262626;white-space:nowrap">Drawing</div><div class="a" style="left:342px;top:118px;width:80px;text-align:center;font-size:11.3px;line-height:16px;color:#262626;white-space:nowrap">Editing</div><div class="a" style="left:399.6px;top:120.80000000000001px;width:80px;text-align:center;font-size:11.3px;line-height:16px;color:#262626;white-space:nowrap">Dictate</div><div class="a" style="left:399.2px;top:160px;width:80px;text-align:center;font-size:11.3px;line-height:16px;color:#262626;white-space:nowrap">Voice</div><div class="a" style="left:465.5px;top:119.8px;width:80px;text-align:center;font-size:11.3px;line-height:16px;color:#a6a6a6;white-space:nowrap">Sensitivity</div><div class="a" style="left:465.5px;top:160px;width:80px;text-align:center;font-size:11.3px;line-height:16px;color:#262626;white-space:nowrap">Sensitivity</div><div class="a" style="left:534px;top:119.8px;width:80px;text-align:center;font-size:11.3px;line-height:16px;color:#262626;white-space:nowrap">Add-ins</div><div class="a" style="left:534px;top:160px;width:80px;text-align:center;font-size:11.3px;line-height:16px;color:#262626;white-space:nowrap">Add-ins</div><div class="a" style="left:599.2px;top:119.8px;width:80px;text-align:center;font-size:11.3px;line-height:16px;color:#262626;white-space:nowrap">Designer</div>
  <svg class="a" style="left:0;top:78px" width="765" height="100" fill="none" stroke="#444" stroke-width="1">
    <g transform="translate(0,-78)"><path d="M37.7 142.9 L40.7 145.9 L43.7 142.9" stroke="#a6a6a6"/><path d="M136 139.5 L139 142.5 L142 139.5" stroke="#444"/><path d="M190.4 139.5 L193.4 142.5 L196.4 139.5" stroke="#444"/><path d="M253.39999999999998 139.5 L256.4 142.5 L259.4 139.5" stroke="#444"/><path d="M320.4 139.5 L323.4 142.5 L326.4 139.5" stroke="#444"/><path d="M379.6 139.5 L382.6 142.5 L385.6 139.5" stroke="#444"/><path d="M436.4 142.5 L439.4 145.5 L442.4 142.5" stroke="#444"/><path d="M502 141.5 L505 144.5 L508 141.5" stroke="#a6a6a6"/><path d="M92 121.5 L95 124.5 L98 121.5" stroke="#888"/>
    <path d="M31.5 92.5H35.5V90H43V92.5H47V115.5H31.5Z" stroke="#b8b8b8" fill="#f4f4f4"/><rect x="44.5" y="96.5" width="12" height="19" stroke="#b8b8b8" fill="#fff"/>
    <path d="M73 88 L80 98 M80 88 L73 98 M73 98 m-2 2 a2 2 0 1 0 4 0 a2 2 0 1 0 -4 0 M80 98 m-2 2 a2 2 0 1 0 4 0 a2 2 0 1 0 -4 0" stroke="#b0b0b0"/>
    <path d="M68.5 114.5H76V125.5H68.5Z M72 117.5H80.5L83 120V127.5H72Z" stroke="#b0b0b0" fill="#fff"/>
    <path d="M69 145 L74 139 L80 143 L76 150 Z" fill="#f5a623" stroke="#e07000"/><path d="M77 141 L83 135 L85 137 L79 143" stroke="#555"/>
    <path d="M100.5 164.5V171.5H107.5 M102 166L107 171 M107 168V171.5H104" stroke="#666"/>
    <rect x="125.5" y="88.5" width="27" height="21"/><rect x="127.5" y="90.5" width="23" height="17" stroke="#666"/><path d="M127.5 94.5H150.5M139 94.5V107.5" stroke="#666"/>
    <path d="M186 105.5 L194 85.5 L202 105.5 M189 98H199" stroke="#222" stroke-width="1.2"/><rect x="178" y="107" width="31.7" height="8" fill="#222" stroke="none"/>
    <path d="M242.8 88.5H271.2M246 94H268M242.8 99.5H271.2M246 105H268M242.8 109H271.2" stroke="#333"/>
    <rect x="309.8" y="85.5" width="21" height="20" stroke="#333"/><path d="M321 107 L329.5 85.5 L338 107 M324 100H335" stroke="#1e78d6" stroke-width="1.4" fill="#fff"/>
    <circle cx="389" cy="92" r="7.5" stroke="#333"/><path d="M383.5 97.5 L376 105" stroke="#333"/>
    <rect x="435" y="86" width="9.5" height="18" rx="4.75" fill="#7fb2e5" stroke="#1e5fa8"/><path d="M431 98 Q431 109 439.7 109 Q448.5 109 448.5 98 M439.7 109V115.5" stroke="#333" stroke-width="1.3"/>
    <path d="M496.5 92.5H513V114H496.5Z" stroke="#c0c0c0" fill="#ebebeb"/><path d="M500 104L515 90L521 96L506 110Z" stroke="#c0c0c0" fill="#f4f4f4"/><path d="M503 105L509 99" stroke="#c0c0c0"/>
    <rect x="560.5" y="87.5" width="27.5" height="27" stroke="#c43e1c" stroke-width="1.3"/><rect x="564" y="91" width="9" height="8.5" stroke="#c43e1c"/><rect x="576" y="91" width="9" height="8.5" stroke="#c43e1c"/><rect x="564" y="102.5" width="9" height="8.5" stroke="#c43e1c"/><rect x="576" y="102.5" width="9" height="8.5" stroke="#c43e1c"/>
    <path d="M629 89 Q647 84 650 100 Q650 115 636 114 Q629 112 629 104 Q637 101 629 95Z" stroke="#4c4ce0" stroke-width="1.3" fill="#eef2fb"/>
    <path d="M738 162 L742.5 166.5 L747 162" stroke="#333" stroke-width="1.2"/>
    </g>
  </svg>
  <div class="a" style="left:0;top:177px;width:765px;height:354px;background:#f0f0f0"></div>
  <div class="a" style="left:4px;top:181.6px;font-size:16px;line-height:20px;color:#c43e1c">43</div><div class="a" style="left:4px;top:237.6px;font-size:16px;line-height:20px;color:#444">44</div><div class="a" style="left:4px;top:293.6px;font-size:16px;line-height:20px;color:#444">45</div><div class="a" style="left:4px;top:349.6px;font-size:16px;line-height:20px;color:#444">46</div><div class="a" style="left:4px;top:405.6px;font-size:16px;line-height:20px;color:#444">47</div><div class="a" style="left:4px;top:461.6px;font-size:16px;line-height:20px;color:#444">48</div><div class="a" style="left:4px;top:517.6px;font-size:16px;line-height:20px;color:#444">49</div><div class="a" style="left:32px;top:185.4px;width:53.6px;height:39.6px;border:2.5px solid #c43e1c;border-radius:5px;background:#fff"></div><div class="a" style="left:35.7px;top:243.0px;width:47px;height:35.6px;border:1px solid #c8c8c8;border-radius:3px;background:#fff;box-shadow:0 1px 1px rgba(0,0,0,.15)"></div><div class="a" style="left:35.7px;top:299.0px;width:47px;height:35.6px;border:1px solid #c8c8c8;border-radius:3px;background:#fff;box-shadow:0 1px 1px rgba(0,0,0,.15)"></div><div class="a" style="left:35.7px;top:355.0px;width:47px;height:35.6px;border:1px solid #c8c8c8;border-radius:3px;background:#fff;box-shadow:0 1px 1px rgba(0,0,0,.15)"></div><div class="a" style="left:35.7px;top:411.0px;width:47px;height:35.6px;border:1px solid #c8c8c8;border-radius:3px;background:#fff;box-shadow:0 1px 1px rgba(0,0,0,.15)"></div><div class="a" style="left:35.7px;top:467.0px;width:47px;height:35.6px;border:1px solid #c8c8c8;border-radius:3px;background:#fff;box-shadow:0 1px 1px rgba(0,0,0,.15)"></div><div class="a" style="left:44px;top:476.0px;width:24px;height:19px;background:#000"></div><div class="a" style="left:48px;top:477.0px;width:16px;height:16px;border-radius:50%;background:radial-gradient(#999,#555)"></div><div class="a" style="left:35.7px;top:523.0px;width:47px;height:35.6px;border:1px solid #c8c8c8;border-radius:3px;background:#fff;box-shadow:0 1px 1px rgba(0,0,0,.15)"></div>
  <div class="a" style="left:45.0px;top:194.5px;width:28px;height:1.5px;background:#8a8a8a"></div><div class="a" style="left:40.0px;top:199.5px;width:32px;height:1px;background:#b4b4b4"></div><div class="a" style="left:40.0px;top:202.1px;width:18px;height:1px;background:#b4b4b4"></div><div class="a" style="left:42.0px;top:204.7px;width:36px;height:1px;background:#b4b4b4"></div><div class="a" style="left:42.0px;top:207.3px;width:20px;height:1px;background:#b4b4b4"></div><div class="a" style="left:42.0px;top:209.9px;width:20px;height:1px;background:#b4b4b4"></div><div class="a" style="left:44.0px;top:212.5px;width:30px;height:1px;background:#b4b4b4"></div><div class="a" style="left:44.0px;top:215.1px;width:34px;height:1px;background:#b4b4b4"></div><div class="a" style="left:42.0px;top:217.7px;width:36px;height:1px;background:#b4b4b4"></div><div class="a" style="left:45.2px;top:248.0px;width:28px;height:1.5px;background:#8a8a8a"></div><div class="a" style="left:39.7px;top:253.0px;width:34px;height:1px;background:#b4b4b4"></div><div class="a" style="left:39.7px;top:255.6px;width:22px;height:1px;background:#b4b4b4"></div><div class="a" style="left:39.7px;top:258.2px;width:34px;height:1px;background:#b4b4b4"></div><div class="a" style="left:39.7px;top:260.8px;width:20px;height:1px;background:#b4b4b4"></div><div class="a" style="left:39.7px;top:263.4px;width:34px;height:1px;background:#b4b4b4"></div><div class="a" style="left:39.7px;top:266.0px;width:14px;height:1px;background:#b4b4b4"></div><div class="a" style="left:45.2px;top:304.0px;width:28px;height:1.5px;background:#8a8a8a"></div><div class="a" style="left:39.7px;top:309.0px;width:14px;height:1px;background:#b4b4b4"></div><div class="a" style="left:41.7px;top:311.6px;width:26px;height:1px;background:#b4b4b4"></div><div class="a" style="left:41.7px;top:314.2px;width:34px;height:1px;background:#b4b4b4"></div><div class="a" style="left:41.7px;top:316.8px;width:30px;height:1px;background:#b4b4b4"></div><div class="a" style="left:41.7px;top:319.4px;width:20px;height:1px;background:#b4b4b4"></div><div class="a" style="left:45.2px;top:360.0px;width:28px;height:1.5px;background:#8a8a8a"></div><div class="a" style="left:39.7px;top:365.0px;width:32px;height:1px;background:#b4b4b4"></div><div class="a" style="left:39.7px;top:367.6px;width:20px;height:1px;background:#b4b4b4"></div><div class="a" style="left:41.7px;top:370.2px;width:26px;height:1px;background:#b4b4b4"></div><div class="a" style="left:41.7px;top:372.8px;width:30px;height:1px;background:#b4b4b4"></div><div class="a" style="left:41.7px;top:375.4px;width:34px;height:1px;background:#b4b4b4"></div><div class="a" style="left:39.7px;top:378.0px;width:20px;height:1px;background:#b4b4b4"></div><div class="a" style="left:41.7px;top:380.6px;width:34px;height:1px;background:#b4b4b4"></div><div class="a" style="left:39.7px;top:383.2px;width:24px;height:1px;background:#b4b4b4"></div><div class="a" style="left:45.2px;top:416.0px;width:28px;height:1.5px;background:#8a8a8a"></div><div class="a" style="left:39.7px;top:421.0px;width:24px;height:1px;background:#b4b4b4"></div><div class="a" style="left:39.7px;top:423.6px;width:34px;height:1px;background:#b4b4b4"></div><div class="a" style="left:39.7px;top:426.2px;width:28px;height:1px;background:#b4b4b4"></div><div class="a" style="left:39.7px;top:428.8px;width:34px;height:1px;background:#b4b4b4"></div><div class="a" style="left:39.7px;top:431.4px;width:30px;height:1px;background:#b4b4b4"></div><svg class="a" style="left:100px;top:177px" width="665" height="354" fill="#666" stroke="none">
    <path d="M6.5 12 L10.5 7 L14.5 12Z M6.5 341 L10.5 346 L14.5 341Z"/>
    <rect x="7" y="230" width="7" height="31" rx="3.5" fill="#888"/>
    <path d="M22.4 0 V354" stroke="#d0d0d0" stroke-width="1"/>
    <path d="M652 12 L656 7 L660 12Z M652 227 L656 232 L660 227Z M652 247 L656 242 L660 247Z M652 251 L656 246 L660 251Z M652 259 L656 264 L660 259Z M652 263 L656 268 L660 263Z"/>
    <rect x="652.5" y="145" width="7" height="16" rx="3.5" fill="#888"/>
    <path d="M24 293.7 H665" stroke="#c8c8c8" stroke-width="1"/>
  </svg>
  <div class="a" style="left:257px;top:187px;width:361px;height:271px;background:#fff;border:1px solid #c6c6c6;color:#000"><div class="a" style="left:21.5px;top:70.0px;width:4px;height:4px;border-radius:50%;background:#000"></div><div class="a" style="left:35.3px;top:63.5px;font-size:13.6px;line-height:17px;white-space:nowrap">Life-threatening neurosurgical emergency</div><div class="a" style="left:21.5px;top:87.9px;width:4px;height:4px;border-radius:50%;background:#000"></div><div class="a" style="left:35.3px;top:81.4px;font-size:13.6px;line-height:17px;white-space:nowrap">Priorities of management:</div><div class="a" style="left:37px;top:107px;width:7px;height:1px;background:#000"></div><div class="a" style="left:51px;top:99.1px;font-size:11.8px;line-height:15px;white-space:nowrap">Neurosurgical consultation ASAP for ?clipping/coiling</div><div class="a" style="left:51px;top:111.2px;font-size:11.8px;line-height:15px;white-space:nowrap">of aneurysm or AVM repair</div><div class="a" style="left:37px;top:135px;width:7px;height:1px;background:#000"></div><div class="a" style="left:51px;top:127.3px;font-size:11.8px;line-height:15px;white-space:nowrap">Analgesia</div><div class="a" style="left:37px;top:150px;width:7px;height:1px;background:#000"></div><div class="a" style="left:51px;top:142.9px;font-size:11.8px;line-height:15px;white-space:nowrap">Avoid secondary brain injury:</div><div class="a" style="left:57.5px;top:162.8px;width:3px;height:3px;border-radius:50%;background:#000"></div><div class="a" style="left:66.7px;top:157.8px;font-size:10px;line-height:13px;white-space:nowrap">Hypoxia</div><div class="a" style="left:57.5px;top:175.7px;width:3px;height:3px;border-radius:50%;background:#000"></div><div class="a" style="left:66.7px;top:170.7px;font-size:10px;line-height:13px;white-space:nowrap">Hypoglycaemia</div><div class="a" style="left:57.5px;top:189.5px;width:3px;height:3px;border-radius:50%;background:#000"></div><div class="a" style="left:66.7px;top:184.5px;font-size:10px;line-height:13px;white-space:nowrap">Re-bleeding (judicious blood pressure management)</div><div class="a" style="left:57.5px;top:202.8px;width:3px;height:3px;border-radius:50%;background:#000"></div><div class="a" style="left:66.7px;top:197.8px;font-size:10px;line-height:13px;white-space:nowrap">Aspiration</div><div class="a" style="left:57.5px;top:215.5px;width:3px;height:3px;border-radius:50%;background:#000"></div><div class="a" style="left:66.7px;top:210.5px;font-size:10px;line-height:13px;white-space:nowrap">Raised ICP</div><div class="a" style="left:37px;top:232px;width:7px;height:1px;background:#000"></div><div class="a" style="left:51px;top:224.2px;font-size:11.8px;line-height:15px;white-space:nowrap">Delayed risk of cerebral vasospasm <span style="font-size:13px">&#8594;</span> nimodipine</div><div class="a" style="left:0;top:25px;width:359px;text-align:center;font-size:20px;line-height:20px;white-space:nowrap">Subarachnoid haemorrhage</div><svg class="a" style="left:253px;top:237px" width="60" height="4"><path d="M0 2 L1.5 0.5 L3 2 L4.5 0.5 L6 2 L7.5 0.5 L9 2 L10.5 0.5 L12 2 L13.5 0.5 L15 2 L16.5 0.5 L18 2 L19.5 0.5 L21 2 L22.5 0.5 L24 2 L25.5 0.5 L27 2 L28.5 0.5 L30 2 L31.5 0.5 L33 2 L34.5 0.5 L36 2 L37.5 0.5 L39 2 L40.5 0.5 L42 2 L43.5 0.5 L45 2 L46.5 0.5 L48 2 L49.5 0.5 L51 2 L52.5 0.5 L54 2 L55.5 0.5 L57 2 L58.5 0.5 L60 2" stroke="#e03030" stroke-width="0.8" fill="none"/></svg></div>
  <div class="a" style="left:0;top:531px;width:765px;height:22px;background:#f0f0f0;border-top:1px solid #dcdcdc"></div>
  <div class="a ps" style="left:12px">Slide 43 of 63</div>
  <div class="a ps" style="left:113.4px">English (Australia)</div>
  <div class="a ps" style="left:347px">Notes</div>
  <div class="a ps" style="left:701px">38%</div>
  <div class="a" style="left:395.7px;top:532px;width:40.3px;height:21px;background:#d8d8d8"></div>
  <svg class="a" style="left:0;top:531px" width="765" height="22" fill="none" stroke="#444" stroke-width="1">
    <path d="M329 12.5H346M329 16H346M329 19.5H346M333.5 8L337.5 4.5L341.5 8"/>
    <path d="M409.5 6.5H422.5V16.5H409.5Z M411.5 8.5V14.5M413.5 8.5H420.5V14.5H413.5"/>
    <rect x="448.5" y="6.5" width="6" height="5"/><rect x="457.5" y="6.5" width="6" height="5"/><rect x="448.5" y="13.5" width="6" height="5"/><rect x="457.5" y="13.5" width="6" height="5"/>
    <path d="M488.5 6.5Q492 5.5 495 7V17.5Q492 16 488.5 17Z M495 7Q498 5.5 502 6.5V17Q498 16 495 17.5"/>
    <path d="M529 6.5H542 M530 6.5V13.5H541V6.5 M535.5 13.5V18 M532 18H539"/>
    <path d="M565.7 11.5H572 M683.6 11.5H690.5M687 8V15"/><path d="M574.6 11.5H674.7" stroke="#888"/><rect x="589" y="6" width="5" height="11" fill="#555" stroke="none"/><path d="M624.5 9V14" stroke="#888"/>
    <path d="M741 4 L738 7H744Z M741 19 L738 16H744Z M734 11.5 L737 8.5V14.5Z M748.5 11.5 L745.5 8.5V14.5Z M737.5 7.5H744.5V15.5H737.5Z"/>
  </svg>
</div>

<!-- EXPLORER -->
<div class="a" style="left:1124px;top:469px;width:1px;height:553px;background:#3a3a3a"></div>
<div class="w" id="exp" style="left:1125px;top:469px;width:780px;height:553px;background:#191919">
  <div class="a" style="left:0;top:0;width:780px;height:40px;background:#1f1f1f"></div>
  <div class="a" style="left:8px;top:8.5px;width:240px;height:32px;background:#2c2c2c;border-radius:8px 8px 0 0"></div>
  <div class="a" style="left:0;top:40px;width:780px;height:47px;background:#2c2c2c"></div>
  <div class="a" style="left:201px;top:48px;width:402px;height:31.5px;background:#383838;border-radius:4px"></div>
  <div class="a" style="left:612px;top:48.5px;width:170px;height:31px;background:#383838;border-radius:4px"></div>
  <div class="a" style="left:0;top:86.5px;width:780px;height:1px;background:#3a3a3a"></div>
  <div class="a" style="left:0;top:87.5px;width:780px;height:54px;background:#1c1c1c"></div>
  <div class="a" style="left:0;top:141.5px;width:780px;height:1px;background:#333"></div>
  <svg class="a" style="left:0;top:0" width="780" height="142" fill="none" stroke="#fff" stroke-width="1">
    <path d="M0 40 Q8 40 8 32 V40Z M248 32 Q248 40 256 40 H248Z" fill="#2c2c2c" stroke="none"/>
    <path d="M17.5 18.5H23.5L25 20H32.5V30.5H17.5Z" fill="#f5c542" stroke="none"/><path d="M17.5 22.5H32.5V30.5H17.5Z" fill="#ffd866" stroke="none"/>
    <path d="M222 19.5L231 28.5M231 19.5L222 28.5"/>
    <path d="M265 24.5H276M270.5 19V30"/>
    <path d="M661 15.5H671"/><rect x="706.5" y="10.5" width="9" height="9"/><path d="M752 10L762 20M762 10L752 20"/>
    <path d="M20.5 63.5H33 M26 57L20 63.5L26 70"/>
    <path d="M69 63.5H81.5 M75.5 57L81.5 63.5L75.5 70" stroke="#777"/>
    <path d="M122.5 57V70.5 M116 63.5L122.5 57L129 63.5"/>
    <path d="M176 60 A6 6 0 1 0 177 66 M176.5 56.5V60.5H172.5"/>
    <rect x="214.5" y="57.5" width="14" height="10" rx="1"/><path d="M218 70.5H225 M221.5 67.5V70.5"/>
    <path d="M250 60L254 64L250 68 M379 60.5L383 64.5L379 68.5 M482 60.5L486 64.5L482 68.5"/>
    <circle cx="276" cy="64" r="1" fill="#fff" stroke="none"/><circle cx="281" cy="64" r="1" fill="#fff" stroke="none"/><circle cx="286" cy="64" r="1" fill="#fff" stroke="none"/>
    <circle cx="28.5" cy="115" r="7.5"/><path d="M24.5 115H32.5M28.5 111V119" stroke="#4cc2ff"/>
    <path d="M75 114L77.5 116.5L80 114"/>
    <path d="M98.5 103V128" stroke="#3a3a3a"/>
    <path d="M120 105L128 118M130 105L122 118" stroke="#ccc"/><circle cx="121" cy="120.5" r="2.5" stroke="#4cc2ff"/><circle cx="129" cy="120.5" r="2.5" stroke="#4cc2ff"/>
    <rect x="169.5" y="108.5" width="10" height="11" rx="2" stroke="#4cc2ff"/><path d="M166.5 111.5V120.5Q166.5 122.5 168.5 122.5H175" stroke="#ccc"/>
    <rect x="214.5" y="110.5" width="9" height="12" rx="1.5" stroke="#777"/><rect x="218.5" y="114.5" width="7" height="9" rx="1.5" stroke="#3a6aa0"/>
    <rect x="261" y="109" width="16" height="12" rx="2" stroke="#ccc"/><path d="M263.5 117.5L266 111.5L268.5 117.5M264.5 115.5H267.5" stroke="#4cc2ff"/><path d="M272 106.5V123.5M270 106.5H274M270 123.5H274" stroke="#4cc2ff"/>
    <path d="M311 112V120.5Q311 122.5 313 122.5H322Q324 122.5 324 120.5V118" stroke="#ccc"/><path d="M315 117Q316 110 322 110V107.5L327 111.5L322 115.5V113Q318 113 315 117Z" stroke="#4cc2ff"/>
    <path d="M357.5 109.5H372.5M361 109.5V107H369V109.5 M359.5 109.5L360.5 123H369.5L370.5 109.5 M363 112V120M367 112V120" stroke="#ccc"/>
    <path d="M391.5 103V128 M574.5 103V128" stroke="#3a3a3a"/>
    <path d="M412 108V123M408.5 111.5L412 108L415.5 111.5" stroke="#ccc"/><path d="M420 107V122M416.5 118.5L420 122L423.5 118.5" stroke="#4cc2ff"/>
    <path d="M460 114L463 117L466 114M551 114L554 117L557 114"/>
    <path d="M495 108.5H511M495 111.5H511M495 114.5H511M495 117.5H511M495 120.5H511" stroke="#ddd"/>
    <circle cx="592.5" cy="115.5" r="1.3" fill="#fff" stroke="none"/><circle cx="598.5" cy="115.5" r="1.3" fill="#fff" stroke="none"/><circle cx="604.5" cy="115.5" r="1.3" fill="#fff" stroke="none"/>
    <rect x="695.5" y="109.5" width="16" height="12" rx="2.5" stroke="#ccc"/><path d="M705.5 109.5V121.5" stroke="#4cc2ff"/><path d="M707.5 112.5H710M707.5 115.5H710M707.5 118.5H710" stroke="#4cc2ff"/>
  </svg>
  <div class="a" style="left:43px;top:16px;font-size:12.5px;line-height:16px;color:#fff">System32</div>
  <div class="a ee" style="left:305.4px;top:56px">Windows</div>
  <div class="a ee" style="left:403px;top:56px">System32</div>
  <div class="a ee" style="left:627px;top:56px;color:#cfcfcf">Search System32</div>
  <div class="a ee" style="left:45px;top:107px">New</div>
  <div class="a ee" style="left:432px;top:107px">Sort</div>
  <div class="a ee" style="left:519px;top:107px">View</div>
  <div class="a ee" style="left:719px;top:107.5px">Details</div>
  <div class="a" style="left:0;top:142px;width:159px;height:389px;background:#1a1a1a"></div>
  <div class="a et" style="left:55px;top:156.3px;">Home</div><svg class="a" style="left:34px;top:156.3px" width="16" height="16"><path d="M1 8L8 1.5L15 8" fill="#f07a2a" stroke="#f07a2a" stroke-width="2"/><path d="M3 7.5V15H13V7.5L8 3Z" fill="#f5f5f5"/><rect x="6.5" y="10" width="3" height="5" fill="#999"/></svg><div class="a et" style="left:55px;top:188.6px;">Gallery</div><svg class="a" style="left:34px;top:188.6px" width="17" height="16"><rect x="0.5" y="2" width="14" height="13" rx="1.5" fill="#1e90e8"/><rect x="2.5" y="0.5" width="14" height="12" rx="1.5" fill="#4cc2ff" stroke="#fff" stroke-width="0.8"/><path d="M3 12L8 6L12 10L16 7V12Z" fill="#fff"/></svg><div class="a et" style="left:55px;top:220.5px;width:84px;overflow:hidden;">OneDrive - Personal</div><svg class="a" style="left:16px;top:220.5px" width="40" height="16"><path d="M1 4L5 8L1 12" stroke="#999" fill="none"/><path d="M20.5 0.5H27L31.5 5V15.5H20.5Z" fill="#fff"/></svg><div class="a et" style="left:55px;top:284.7px;">Desktop</div><svg class="a" style="left:34px;top:284.7px" width="16" height="16"><rect x="0.5" y="2" width="15" height="11" rx="1" fill="#3aa0f0"/><rect x="0.5" y="2" width="15" height="3" fill="#7cc8ff"/></svg><svg class="a" style="left:124px;top:285.7px" width="14" height="14"><path d="M5 1.5L12 8.5L10 9L7 12L5.5 10.5L2 14L1.5 13.5L5 10L3.5 8.5L6.5 5.5Z" fill="#9a9a9a"/></svg><div class="a et" style="left:55px;top:316.6px;">Downloads</div><svg class="a" style="left:34px;top:316.6px" width="16" height="16" fill="none" stroke="#3cc890" stroke-width="1.5"><path d="M8 1V11M3.5 6.5L8 11L12.5 6.5M2 14.5H14"/></svg><svg class="a" style="left:124px;top:317.6px" width="14" height="14"><path d="M5 1.5L12 8.5L10 9L7 12L5.5 10.5L2 14L1.5 13.5L5 10L3.5 8.5L6.5 5.5Z" fill="#9a9a9a"/></svg><div class="a et" style="left:55px;top:348.9px;">Documents</div><svg class="a" style="left:35px;top:348.9px" width="14" height="16"><rect x="0.5" y="0.5" width="13" height="15" rx="1" fill="#a8c4f0"/><path d="M3 5H11M3 8H11M3 11H9" stroke="#3a6ad0"/></svg><svg class="a" style="left:124px;top:349.9px" width="14" height="14"><path d="M5 1.5L12 8.5L10 9L7 12L5.5 10.5L2 14L1.5 13.5L5 10L3.5 8.5L6.5 5.5Z" fill="#9a9a9a"/></svg><div class="a et" style="left:55px;top:380.8px;">Pictures</div><svg class="a" style="left:34px;top:380.8px" width="16" height="16"><rect x="0.5" y="1" width="15" height="14" rx="1.5" fill="#3aa8f0"/><path d="M1 14L7 7L11 11L15 8V14Z" fill="#fff"/></svg><svg class="a" style="left:124px;top:381.8px" width="14" height="14"><path d="M5 1.5L12 8.5L10 9L7 12L5.5 10.5L2 14L1.5 13.5L5 10L3.5 8.5L6.5 5.5Z" fill="#9a9a9a"/></svg><div class="a et" style="left:55px;top:412.7px;">Music</div><svg class="a" style="left:34px;top:412.7px" width="16" height="16"><circle cx="8" cy="8" r="7.5" fill="#e8805a"/><path d="M7 11V4L10 3.5" stroke="#fff" fill="none"/><circle cx="6" cy="11" r="1.6" fill="#fff"/></svg><svg class="a" style="left:124px;top:413.7px" width="14" height="14"><path d="M5 1.5L12 8.5L10 9L7 12L5.5 10.5L2 14L1.5 13.5L5 10L3.5 8.5L6.5 5.5Z" fill="#9a9a9a"/></svg><div class="a et" style="left:55px;top:444.5px;">Videos</div><svg class="a" style="left:35px;top:444.5px" width="15" height="16"><rect x="0.5" y="1" width="14" height="14" rx="1.5" fill="#9a6ae8"/><path d="M5 5V11L10 8Z" fill="#fff"/><path d="M1 4H3M1 8H3M1 12H3M12 4H14M12 8H14M12 12H14" stroke="#5a3aa8"/></svg><svg class="a" style="left:124px;top:445.5px" width="14" height="14"><path d="M5 1.5L12 8.5L10 9L7 12L5.5 10.5L2 14L1.5 13.5L5 10L3.5 8.5L6.5 5.5Z" fill="#9a9a9a"/></svg><div class="a et" style="left:55px;top:508.7px;">OneDrive</div><svg class="a" style="left:16px;top:508.7px" width="40" height="16"><path d="M1 4L5 8L1 12" stroke="#999" fill="none"/><path d="M20 13Q17 13 17 10.5Q17 8 20 8Q21 4.5 25 4.5Q29 4.5 30 8Q33 8 33 10.5Q33 13 30 13Z" fill="#1e8ae8"/></svg>
  <div class="a" style="left:10px;top:261px;width:121px;height:1px;background:#3a3a3a"></div>
  <div class="a" style="left:10px;top:484.5px;width:121px;height:1px;background:#3a3a3a"></div>
  <div class="a" style="left:147px;top:160.5px;width:2px;height:258.5px;background:#8a8a8a;border-radius:1px"></div>
  <div class="a" style="left:158.5px;top:142px;width:1px;height:389px;background:#2a2a2a"></div>
  <div class="a et" style="left:190px;top:148px;color:#dcdcdc">Name</div>
  <div class="a et" style="left:438px;top:148px;width:25px;overflow:hidden;color:#dcdcdc">Date</div>
  <div class="a" style="left:431px;top:143px;width:1px;height:35px;background:#3c3c3c"></div>
  <svg class="a" style="left:303px;top:142px" width="10" height="6"><path d="M1 5L5 1L9 5" stroke="#aaa" fill="none"/></svg>
  <div class="a" style="left:174px;top:367.8px;width:287px;height:22.2px;background:#2d2d2d;border-radius:4px"></div>
  <svg class="a" style="left:180px;top:173.8px" width="13" height="17"><path d="M0.5 0.5H8.5L11.5 3.5V16H0.5Z" fill="#fafafa" stroke="#9a9a9a"/><circle cx="5" cy="7" r="2.2" fill="none" stroke="#999" stroke-width="1.3"/><circle cx="7.8" cy="11" r="1.6" fill="none" stroke="#999" stroke-width="1.2"/></svg><div class="a et" style="font-size:12.1px;left:198.4px;top:174.6px">CloudIdWxhExtension.dll</div><div class="a et" style="left:438px;top:174.6px;width:25px;overflow:hidden">15/0</div><svg class="a" style="left:178.5px;top:204.1px" width="16" height="13"><rect x="0.5" y="0.5" width="15" height="11.5" fill="#fafafa" stroke="#aaa"/><rect x="0.5" y="0.5" width="15" height="1.6" fill="#bbb"/><rect x="5" y="3.5" width="6" height="6.5" fill="#1a73e8"/><path d="M2 4.5H3.8M2 6.8H3.8M2 9H3.8M12.2 4.5H14M12.2 6.8H14" stroke="#777" stroke-width="0.8"/></svg><div class="a et" style="font-size:12.1px;left:198.4px;top:202.6px">CloudNotifications.exe</div><div class="a et" style="left:438px;top:202.6px;width:25px;overflow:hidden">15/0</div><svg class="a" style="left:180px;top:229.8px" width="13" height="17"><path d="M0.5 0.5H8.5L11.5 3.5V16H0.5Z" fill="#fafafa" stroke="#9a9a9a"/><circle cx="5" cy="7" r="2.2" fill="none" stroke="#999" stroke-width="1.3"/><circle cx="7.8" cy="11" r="1.6" fill="none" stroke="#999" stroke-width="1.2"/></svg><div class="a et" style="font-size:12.1px;left:198.4px;top:230.6px">CloudRecoveryDownloadTool.dll</div><div class="a et" style="left:438px;top:230.6px;width:25px;overflow:hidden">7/05</div><svg class="a" style="left:180px;top:257.8px" width="13" height="17"><path d="M0.5 0.5H8.5L11.5 3.5V16H0.5Z" fill="#fafafa" stroke="#9a9a9a"/><circle cx="5" cy="7" r="2.2" fill="none" stroke="#999" stroke-width="1.3"/><circle cx="7.8" cy="11" r="1.6" fill="none" stroke="#999" stroke-width="1.2"/></svg><div class="a et" style="font-size:12.1px;left:198.4px;top:258.6px">CloudRestoreLauncher.dll</div><div class="a et" style="left:438px;top:258.6px;width:25px;overflow:hidden">1/07</div><svg class="a" style="left:180px;top:285.8px" width="13" height="17"><path d="M0.5 0.5H8.5L11.5 3.5V16H0.5Z" fill="#fafafa" stroke="#9a9a9a"/><circle cx="5" cy="7" r="2.2" fill="none" stroke="#999" stroke-width="1.3"/><circle cx="7.8" cy="11" r="1.6" fill="none" stroke="#999" stroke-width="1.2"/></svg><div class="a et" style="font-size:12.1px;left:198.4px;top:286.6px">clrhost.dll</div><div class="a et" style="left:438px;top:286.6px;width:25px;overflow:hidden">7/05</div><svg class="a" style="left:180px;top:313.8px" width="13" height="17"><path d="M0.5 0.5H8.5L11.5 3.5V16H0.5Z" fill="#fafafa" stroke="#9a9a9a"/><circle cx="5" cy="7" r="2.2" fill="none" stroke="#999" stroke-width="1.3"/><circle cx="7.8" cy="11" r="1.6" fill="none" stroke="#999" stroke-width="1.2"/></svg><div class="a et" style="font-size:12.1px;left:198.4px;top:314.6px">clusapi.dll</div><div class="a et" style="left:438px;top:314.6px;width:25px;overflow:hidden">15/0</div><svg class="a" style="left:180px;top:341.8px" width="13" height="17"><path d="M0.5 0.5H8.5L11.5 3.5V16H0.5Z" fill="#fafafa" stroke="#9a9a9a"/><circle cx="5" cy="7" r="2.2" fill="none" stroke="#999" stroke-width="1.3"/><circle cx="7.8" cy="11" r="1.6" fill="none" stroke="#999" stroke-width="1.2"/></svg><div class="a et" style="font-size:12.1px;left:198.4px;top:342.6px">cmcfg32.dll</div><div class="a et" style="left:438px;top:342.6px;width:25px;overflow:hidden">7/05</div><svg class="a" style="left:178.5px;top:372.6px" width="15" height="12"><rect x="0.5" y="0.5" width="14" height="11" fill="#000" stroke="#ccc"/><rect x="0.5" y="0.5" width="14" height="2" fill="#bbb"/><text x="1.5" y="9.5" font-size="6" fill="#fff" font-family="Liberation Mono">C:\_</text></svg><div class="a et" style="font-size:12.1px;left:198.4px;top:370.6px">cmd.exe</div><div class="a et" style="left:438px;top:370.6px;width:25px;overflow:hidden">15/0</div><svg class="a" style="left:180px;top:397.8px" width="13" height="17"><path d="M0.5 0.5H8.5L11.5 3.5V16H0.5Z" fill="#fafafa" stroke="#9a9a9a"/><circle cx="5" cy="7" r="2.2" fill="none" stroke="#999" stroke-width="1.3"/><circle cx="7.8" cy="11" r="1.6" fill="none" stroke="#999" stroke-width="1.2"/></svg><div class="a et" style="font-size:12.1px;left:198.4px;top:398.6px">cmdext.dll</div><div class="a et" style="left:438px;top:398.6px;width:25px;overflow:hidden">15/0</div><svg class="a" style="left:180px;top:425.8px" width="13" height="17"><path d="M0.5 0.5H8.5L11.5 3.5V16H0.5Z" fill="#fafafa" stroke="#9a9a9a"/><circle cx="5" cy="7" r="2.2" fill="none" stroke="#999" stroke-width="1.3"/><circle cx="7.8" cy="11" r="1.6" fill="none" stroke="#999" stroke-width="1.2"/></svg><div class="a et" style="font-size:12.1px;left:198.4px;top:426.6px">cmdial32.dll</div><div class="a et" style="left:438px;top:426.6px;width:25px;overflow:hidden">7/05</div><svg class="a" style="left:178.5px;top:456.1px" width="16" height="13"><rect x="0.5" y="0.5" width="15" height="11.5" fill="#fafafa" stroke="#aaa"/><rect x="0.5" y="0.5" width="15" height="1.6" fill="#bbb"/><rect x="5" y="3.5" width="6" height="6.5" fill="#1a73e8"/><path d="M2 4.5H3.8M2 6.8H3.8M2 9H3.8M12.2 4.5H14M12.2 6.8H14" stroke="#777" stroke-width="0.8"/></svg><div class="a et" style="font-size:12.1px;left:198.4px;top:454.6px">cmdkey.exe</div><div class="a et" style="left:438px;top:454.6px;width:25px;overflow:hidden">7/05</div><svg class="a" style="left:179px;top:483.6px" width="14" height="15"><rect x="2" y="0.5" width="11" height="9" fill="#fff" stroke="#aaa"/><path d="M1 14L7 8L10 11L4 14Z" fill="#e8a040" stroke="#7a4a10" stroke-width="0.7"/></svg><div class="a et" style="font-size:12.1px;left:198.4px;top:482.6px">cmdl32.exe</div><div class="a et" style="left:438px;top:482.6px;width:25px;overflow:hidden">7/05</div>
  <div class="a" style="left:179px;top:510px;width:12px;height:2px;background:#ddd"></div>
  <div class="a" style="left:193px;top:512.5px;width:285px;height:1px;background:#2a2a2a"></div>
  <div class="a" style="left:176px;top:520.5px;width:128.5px;height:2px;background:#8a8a8a;border-radius:1px"></div>
  <div class="a" style="left:469.5px;top:210px;width:2px;height:16.6px;background:#9a9a9a;border-radius:1px"></div>
  <div class="a" style="left:479px;top:142px;width:301px;height:221px;background:#232323"></div>
  <div class="a" style="left:479px;top:363px;width:301px;height:168px;background:#1c1c1c"></div>
  <div class="a" style="left:479px;top:142px;width:1px;height:389px;background:#2a2a2a"></div>
  <svg class="a" style="left:584px;top:213px" width="92" height="77"><defs><linearGradient id="pvg" x1="0" x2="1" y1="0" y2="0"><stop offset="0" stop-color="#3a3a3a"/><stop offset="1" stop-color="#0e0e0e"/></linearGradient></defs>
<rect x="0" y="0" width="92" height="77" fill="#e4e8ec"/><rect x="0" y="0" width="92" height="4" fill="#dcdcdc"/><rect x="1" y="4" width="89" height="71.5" fill="#000"/>
<path d="M1 4 H90 V23.5 Q50 22 1 43 Z" fill="url(#pvg)"/><text x="3.5" y="11.5" font-size="5.5" fill="#ddd" font-family="Liberation Mono">C:\_</text></svg>
  <div class="a" style="left:502px;top:389px;width:27px;height:22px;background:#000;border:1px solid #888;border-top:3px solid #888"></div>
  <div class="a" style="left:505px;top:393px;font-size:7px;color:#fff;font-family:Liberation Mono">C:\_</div>
  <div class="a" style="left:542px;top:391px;font-size:15.8px;line-height:20px;color:#fff;font-weight:bold">cmd.exe</div>
  <div class="a" style="left:502px;top:430.6px;width:78px;height:29.2px;background:#2b2b2b;border-radius:4px"></div>
  <svg class="a" style="left:515px;top:437px" width="16" height="16" fill="none"><path d="M1.5 5V13Q1.5 14.5 3 14.5H12Q13.5 14.5 13.5 13V10.5" stroke="#ccc"/><path d="M4.5 10Q5.5 4 11 4V1.5L15 5L11 8.5V6Q7.5 6 4.5 10Z" stroke="#4cc2ff"/></svg>
  <div class="a ee" style="left:538px;top:437px">Share</div>
  <div class="a" style="left:502px;top:492.5px;font-size:12.5px;line-height:16px;color:#fff;font-weight:bold">Details</div>
  <div class="a ee" style="left:502px;top:520px;color:#ccc">Type</div>
  <div class="a ee" style="left:659px;top:520px;width:100px;text-align:right;color:#ccc">Application</div>
  <div class="a" style="left:774.5px;top:145px;width:2px;height:283.7px;background:#8a8a8a;border-radius:1px"></div>
  <div class="a" style="left:0;top:531px;width:780px;height:22px;background:#1c1c1c"></div>
  <div class="a ee" style="left:13.6px;top:533.5px;font-size:11.6px">4,554 items</div>
  <div class="a ee" style="left:83px;top:533.5px;font-size:11.6px">|</div>
  <div class="a ee" style="left:94px;top:533.5px;font-size:11.6px">1 item selected&#160; 316 KB</div>
  <div class="a ee" style="left:224px;top:533.5px;font-size:11.6px">|</div>
  <div class="a" style="left:733.5px;top:532px;width:19.5px;height:19px;background:#4a4a4a;border-radius:2px"></div>
  <svg class="a" style="left:733px;top:531px" width="47" height="22" fill="none" stroke="#fff"><path d="M4 6.5H16M4 9.5H16M4 12.5H16M4 15.5H16"/><rect x="26.5" y="4.5" width="13" height="13" stroke-width="1.3"/><rect x="28.5" y="6.5" width="9" height="8" fill="#fff" stroke="none"/></svg>
</div>

<!-- TASKBAR -->
<div class="a" id="tb" style="left:0;top:1039px;width:1920px;height:41px;background:#333">
  <svg class="a" style="left:0;top:0" width="1920" height="41">
    <g transform="translate(9.8,10.8)"><path d="M0 10 A10 10 0 1 1 10 20 H1.5 Q0 20 0 18.5Z" fill="#51a2da"/>
    <path d="M9.8 13.6 V8.6 A3.3 3.3 0 0 1 13.8 5.6 M9.8 13.6 A3.1 3.1 0 1 1 6.7 10.5 H13.2" stroke="#fff" stroke-width="2" fill="none"/></g>
    <rect x="138.5" y="11.5" width="19" height="19" rx="3" fill="#1e1e1e" stroke="#555"/><text x="141" y="19" font-size="6" fill="#fff" font-family="Liberation Mono">$_</text>
    <rect x="178.5" y="11.5" width="19" height="19" rx="3" fill="#c03030"/><path d="M181.5 16H187L188.5 17.5H194.5V27.5H181.5Z" fill="#f4d4d4"/>
    <rect x="218.5" y="11.5" width="19" height="19" rx="3" fill="#f26a2a"/><path d="M231.5 16.5 A5.8 5.8 0 1 1 223 17.5" fill="none" stroke="#fff" stroke-width="3"/><path d="M222 14.5 Q226 14 227 17 Q229 18.5 231 17" fill="none" stroke="#fff" stroke-width="1.8"/>
    <rect x="258.5" y="11.5" width="19" height="19" rx="3" fill="#1ed760"/><path d="M262.5 18Q268 16 273.5 19M263 21Q268 19.5 273 22M263.5 24Q268 23 272.5 25" stroke="#111" stroke-width="1.6" fill="none"/>
    <rect x="298.5" y="11.5" width="19" height="19" rx="3" fill="#2b5fbf"/><text x="301" y="26" font-size="14" font-weight="bold" fill="#fff" font-family="Liberation Sans">W</text>
    <rect x="338.5" y="11.5" width="19" height="19" rx="3" fill="#d8532a"/><text x="343" y="26" font-size="14" font-weight="bold" fill="#fff" font-family="Liberation Sans">P</text>
    <rect x="378.5" y="11.5" width="19" height="19" rx="3" fill="#1f7a45"/><text x="382.5" y="26" font-size="14" font-weight="bold" fill="#fff" font-family="Liberation Sans">X</text>
    <rect x="418.5" y="11.5" width="19" height="19" rx="3" fill="#1a7ad8"/><rect x="421" y="15" width="8" height="12" rx="1" fill="#fff"/><circle cx="425" cy="21" r="2.5" fill="#1a7ad8"/><path d="M430 16H436V26H430" stroke="#fff" stroke-width="1" fill="none"/>
  </svg>
  <div class="a" style="left:38px;top:12px;font-size:14.2px;line-height:18px;color:#ececec">Applications</div>
  <div class="a" style="left:448px;top:1px;width:199.5px;height:40px;background:#232323;border-radius:4px 4px 0 0"></div>
  <svg class="a" style="left:448px;top:0" width="40" height="41"><rect x="4" y="11" width="16" height="13" fill="#222" stroke="#666"/><rect x="4" y="11" width="16" height="3" fill="#777"/><path d="M6 17L9 19.5L6 22" stroke="#ccc" fill="none"/><circle cx="16.6" cy="29.8" r="8" fill="#fff"/><text x="13" y="34" font-size="11" font-weight="bold" fill="#222" font-family="Liberation Sans">5</text></svg>
  <div class="a" style="left:477.5px;top:12px;font-size:14.5px;line-height:18px;color:#ececec">Command Prompt</div>
  <svg class="a" style="left:650px;top:0" width="22" height="41"><rect x="2.5" y="12.5" width="15" height="15" rx="3" fill="#1e1e1e" stroke="#555"/><text x="4.5" y="19" font-size="5.5" fill="#fff" font-family="Liberation Mono">$_</text></svg>
  <div class="a" style="left:677px;top:12px;font-size:14.5px;line-height:18px;color:#ececec">Terminal - RohanBarar@L...</div>
  <div class="a" style="left:1386.5px;top:1.5px;width:69.5px;height:37px;border:1px solid #e8e8e8"></div>
  <svg class="a" style="left:1400px;top:0" width="520" height="41">
    <rect x="7" y="5" width="28.5" height="29" rx="6" fill="#f26a2a"/><path d="M27.5 13.5 A9 9 0 1 1 14.5 15" fill="none" stroke="#fff" stroke-width="4.5"/><path d="M12.5 11 Q19 10 20 15 Q23 17.5 26.5 15" fill="none" stroke="#fff" stroke-width="2.6"/>
    <path d="M127 1V41" stroke="#444"/>
    <g fill="#222" stroke="#ddd" stroke-width="1"><rect x="199.5" y="1.5" width="24" height="15"/><rect x="225.5" y="1.5" width="20" height="15"/><rect x="247.5" y="1.5" width="22" height="15"/>
    <rect x="199.5" y="18.5" width="10" height="19"/><rect x="211.5" y="18.5" width="26" height="19"/><rect x="239.5" y="18.5" width="30" height="19" fill="#777"/></g>
    <circle cx="224" cy="28" r="7" fill="#c43e1c"/><text x="220.5" y="32" font-size="10" font-weight="bold" fill="#fff" font-family="Liberation Sans">P</text>
    <path d="M243 25H250L252 27H266V35H243Z" fill="#f5c542"/><rect x="243" y="27" width="23" height="8" fill="#ffd866"/>
    <path d="M287 26 L291 14 L296 22Z" fill="none" stroke="#2a9ad8" stroke-width="2.2"/><path d="M283 26 Q288 29 296 26" stroke="#e87a2a" stroke-width="2.2" fill="none"/><path d="M291 14 L283 26" stroke="#2ab860" stroke-width="2.2"/>
    <path d="M304 17 Q309.5 12.5 315 17M306 20 Q309.5 17 313 20M308 23 Q309.5 21.5 311 23" stroke="#3a8ad8" stroke-width="1.6" fill="none"/>
    <ellipse cx="331.8" cy="21" rx="7" ry="10" fill="#f2f2f2"/><path d="M329 16L335 25L332 28V14L335 17L329 25" stroke="#333" stroke-width="1.2" fill="none"/>
    <path d="M351 17H355L360 12V30L355 25H351Z" fill="#f0f0f0"/><path d="M362.5 16 Q366 21 362.5 26" stroke="#f0f0f0" stroke-width="1.8" fill="none"/>
    <rect x="394" y="12" width="11" height="21" rx="1.5" fill="none" stroke="#ddd" stroke-width="1.8"/><rect x="397" y="9" width="5" height="3" fill="#ddd"/><path d="M404 22 L399 29 L403 29 L399 36" stroke="#ddd" stroke-width="1.5" fill="none"/>
  </svg>
  <div class="a" style="left:1810px;top:12px;font-size:15px;line-height:18px;color:#e0e0e0">78%</div>
  <div class="a" style="left:1850px;top:12px;font-size:14px;line-height:18px;color:#f0f0f0;font-weight:bold">08:03 PM</div>
</div>

</body></html>
